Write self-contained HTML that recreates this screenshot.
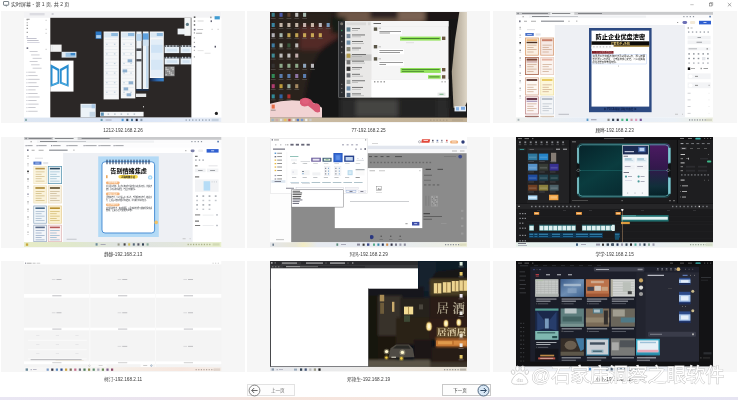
<!DOCTYPE html><html lang="zh-CN"><head><meta charset="utf-8"><title>实时屏幕</title><style>
html,body{margin:0;padding:0;background:#fff}
body{width:738px;height:400px;position:relative;overflow:hidden;font-family:"Liberation Sans","Noto Sans CJK SC",sans-serif}
#pg{position:absolute;left:0;top:0;width:738px;height:400px;overflow:hidden;background:#fff;filter:blur(0.4px)}
.abs{position:absolute}
.panel{position:absolute;background:#f6f6f6}
.thumb{position:absolute;overflow:hidden;display:block}
.lbl{position:absolute;width:120px;text-align:center;font-size:4.72px;line-height:6px;color:#3a3a3a;white-space:nowrap}
.title{position:absolute;left:11px;top:1.3px;font-size:5.0px;line-height:6.4px;color:#3c3c3c;white-space:nowrap}
.btn{position:absolute;box-sizing:border-box;border:0.6px solid #e2e2e2;background:#fdfdfd;font-size:4.6px;color:#666;line-height:11px}
svg text{font-family:"Liberation Sans","Noto Sans CJK SC",sans-serif}

</style></head><body><div id="pg">
<svg class="abs" style="left:3px;top:1.3px" width="7" height="6" viewBox="0 0 7 6"><rect x="0.5" y="0.5" width="5.2" height="3.7" rx="0.5" fill="#fff" stroke="#44505a" stroke-width="0.7"/><path d="M2 4.3 L3 5.3 L4.2 4.3" fill="none" stroke="#44505a" stroke-width="0.6"/></svg>
<div class="title">实时屏幕 - 第 1 页, 共 2 页</div>
<svg class="abs" style="left:686px;top:0" width="52" height="10" viewBox="686 0 52 10"><path d="M690.3 4.7 H693.7" stroke="#888" stroke-width="0.5"/><rect x="709.3" y="3.2" width="2.6" height="2.8" fill="none" stroke="#666" stroke-width="0.5"/><path d="M710 3.2 V2.5 H712.7 V5.3 H711.9" fill="none" stroke="#666" stroke-width="0.45"/><path d="M727.8 3 L731.3 6.4 M731.3 3 L727.8 6.4" stroke="#666" stroke-width="0.55"/></svg>
<div class="panel" style="left:1.0px;top:11.4px;width:243.5px;height:111.8px"></div>
<div class="panel" style="left:246.7px;top:11.4px;width:243.7px;height:111.8px"></div>
<div class="panel" style="left:492.6px;top:11.4px;width:244.6px;height:111.8px"></div>
<div class="panel" style="left:1.0px;top:136.7px;width:243.5px;height:111.3px"></div>
<div class="panel" style="left:246.7px;top:136.7px;width:243.7px;height:111.3px"></div>
<div class="panel" style="left:492.6px;top:136.7px;width:244.6px;height:111.3px"></div>
<div class="panel" style="left:1.0px;top:260.6px;width:243.5px;height:111.3px"></div>
<div class="panel" style="left:246.7px;top:260.6px;width:243.7px;height:111.3px"></div>
<div class="panel" style="left:492.6px;top:260.6px;width:244.6px;height:111.3px"></div>
<svg class="thumb" style="left:24.4px;top:12.2px" width="197.3" height="110.3" viewBox="24.4 12.2 197.3 110.3"><defs><linearGradient id="t1bar" x1="0" x2="1" y1="0" y2="0"><stop offset="0" stop-color="#16233e"/><stop offset="0.5" stop-color="#2a62a8"/><stop offset="1" stop-color="#3b84c8"/></linearGradient>
<linearGradient id="t1task" x1="0" x2="1" y1="0" y2="0"><stop offset="0" stop-color="#dde6f2"/><stop offset="0.5" stop-color="#d9e4f6"/><stop offset="1" stop-color="#e6ecf6"/></linearGradient>
</defs><rect x="24.40" y="12.20" width="197.30" height="110.30" fill="#ffffff" /><rect x="24.40" y="12.20" width="197.30" height="5.80" fill="#f3f3f5" /><rect x="30.00" y="13.20" width="15.00" height="2.40" fill="#dcdce2" /><rect x="52.00" y="13.40" width="2.00" height="1.60" fill="#c8c8d0" /><rect x="27.00" y="19.00" width="3.00" height="0.80" fill="#777" /><rect x="27.00" y="19.50" width="1.30" height="1.00" fill="#999" /><rect x="27.00" y="22.50" width="1.30" height="1.00" fill="#aaa" /><rect x="27.00" y="25.00" width="1.30" height="1.00" fill="#888" /><rect x="27.00" y="28.00" width="1.30" height="1.00" fill="#777" /><rect x="27.00" y="32.00" width="1.30" height="1.00" fill="#888" /><rect x="27.00" y="36.50" width="1.30" height="1.00" fill="#99a" /><rect x="27.00" y="38.30" width="10.00" height="0.70" fill="#aab" /><rect x="27.50" y="40.50" width="11.50" height="0.60" fill="#99a" /><rect x="27.50" y="42.30" width="12.50" height="0.60" fill="#bbc" /><rect x="27.00" y="47.50" width="1.60" height="1.70" fill="#778" /><rect x="30.00" y="51.50" width="8.00" height="0.70" fill="#b8b8c0" /><rect x="31.50" y="54.80" width="8.50" height="0.70" fill="#b8b8c0" /><rect x="33.00" y="58.10" width="9.00" height="0.70" fill="#b8b8c0" /><rect x="30.00" y="61.40" width="8.00" height="0.70" fill="#b8b8c0" /><rect x="31.50" y="64.70" width="8.50" height="0.70" fill="#b8b8c0" /><rect x="33.00" y="68.00" width="9.00" height="0.70" fill="#b8b8c0" /><rect x="27.00" y="72.00" width="0.70" height="0.80" fill="#889" /><rect x="28.60" y="72.00" width="7.40" height="0.70" fill="#b4b4bc" /><rect x="27.00" y="75.55" width="0.70" height="0.80" fill="#889" /><rect x="28.60" y="75.55" width="9.40" height="0.70" fill="#b4b4bc" /><rect x="27.00" y="79.10" width="0.70" height="0.80" fill="#889" /><rect x="28.60" y="79.10" width="11.40" height="0.70" fill="#b4b4bc" /><rect x="27.00" y="82.65" width="0.70" height="0.80" fill="#889" /><rect x="28.60" y="82.65" width="8.40" height="0.70" fill="#b4b4bc" /><rect x="27.00" y="86.20" width="0.70" height="0.80" fill="#889" /><rect x="28.60" y="86.20" width="10.40" height="0.70" fill="#b4b4bc" /><rect x="27.00" y="89.75" width="0.70" height="0.80" fill="#889" /><rect x="28.60" y="89.75" width="7.40" height="0.70" fill="#b4b4bc" /><rect x="27.00" y="93.30" width="0.70" height="0.80" fill="#889" /><rect x="28.60" y="93.30" width="9.40" height="0.70" fill="#b4b4bc" /><rect x="27.00" y="96.85" width="0.70" height="0.80" fill="#889" /><rect x="28.60" y="96.85" width="11.40" height="0.70" fill="#b4b4bc" /><rect x="27.00" y="100.40" width="0.70" height="0.80" fill="#889" /><rect x="28.60" y="100.40" width="8.40" height="0.70" fill="#b4b4bc" /><rect x="27.00" y="103.95" width="0.70" height="0.80" fill="#889" /><rect x="28.60" y="103.95" width="10.40" height="0.70" fill="#b4b4bc" /><rect x="27.00" y="107.50" width="0.70" height="0.80" fill="#889" /><rect x="28.60" y="107.50" width="7.40" height="0.70" fill="#b4b4bc" /><rect x="27.00" y="111.05" width="0.70" height="0.80" fill="#889" /><rect x="28.60" y="111.05" width="9.40" height="0.70" fill="#b4b4bc" /><rect x="46.00" y="20.00" width="1.00" height="1.00" fill="#bbb" /><rect x="46.00" y="29.00" width="1.00" height="1.00" fill="#bbb" /><rect x="46.00" y="33.00" width="1.00" height="1.00" fill="#bbb" /><rect x="46.00" y="49.00" width="1.00" height="1.00" fill="#bbb" /><rect x="50.70" y="18.00" width="141.30" height="99.80" fill="#2b2726" /><rect x="50.70" y="44.80" width="11.30" height="7.20" fill="#f1f1f1" /><rect x="52.30" y="46.00" width="0.70" height="0.70" fill="#c8d4dc" /><rect x="52.30" y="47.90" width="0.70" height="0.70" fill="#c8d4dc" /><rect x="52.30" y="49.80" width="0.70" height="0.70" fill="#c8d4dc" /><rect x="54.70" y="46.00" width="-1.70" height="0.70" fill="#c8d4dc" /><rect x="54.70" y="47.90" width="-1.70" height="0.70" fill="#c8d4dc" /><rect x="54.70" y="49.80" width="-1.70" height="0.70" fill="#c8d4dc" /><rect x="57.10" y="46.00" width="-4.10" height="0.70" fill="#c8d4dc" /><rect x="57.10" y="47.90" width="-4.10" height="0.70" fill="#c8d4dc" /><rect x="57.10" y="49.80" width="-4.10" height="0.70" fill="#c8d4dc" /><rect x="59.50" y="46.00" width="-6.50" height="0.70" fill="#c8d4dc" /><rect x="59.50" y="47.90" width="-6.50" height="0.70" fill="#c8d4dc" /><rect x="59.50" y="49.80" width="-6.50" height="0.70" fill="#c8d4dc" /><rect x="62.00" y="52.00" width="14.80" height="5.80" fill="#dfe9f1" /><rect x="66.00" y="53.00" width="10.00" height="4.00" fill="#9cc3e3" /><rect x="71.00" y="53.20" width="4.50" height="2.30" fill="#3a86c8" /><rect x="50.70" y="60.80" width="23.20" height="31.00" fill="#ffffff" /><g><path d="M51 64.4 L59.7 69.3 L59.7 83.7 L51 87 Z" fill="#2a8ed0"/><path d="M69 64.4 L60.3 69.3 L60.3 83.7 L69 87 Z" fill="#2a8ed0"/><path d="M52.9 68.2 L57.9 71 L57.9 82.2 L52.9 84.2 Z" fill="#ffffff"/><path d="M67.1 68.2 L62.1 71 L62.1 82.2 L67.1 84.2 Z" fill="#ffffff"/><path d="M51.6 85.6 L59 82.9 M68.4 85.6 L61 82.9" stroke="#6fd0f2" stroke-width="0.5" fill="none"/></g><rect x="96.00" y="31.70" width="5.90" height="7.30" fill="#2b78c6" /><rect x="96.60" y="35.30" width="4.70" height="3.10" fill="#a9cdec" /><rect x="104.00" y="31.70" width="15.30" height="67.90" fill="#f6f7f8" /><rect x="104.60" y="32.90" width="14.10" height="4.80" fill="#dbe8f3" /><rect x="111.65" y="33.20" width="6.65" height="3.00" fill="#8fbbe0" /><rect x="105.50" y="39.70" width="12.30" height="0.50" fill="#dfe5ea" /><rect x="105.50" y="42.90" width="12.30" height="0.50" fill="#dfe5ea" /><rect x="106.50" y="43.90" width="1.50" height="1.20" fill="#c2d2e0" /><rect x="114.30" y="43.90" width="1.50" height="1.20" fill="#c2d2e0" /><rect x="105.50" y="46.10" width="12.30" height="0.50" fill="#dfe5ea" /><rect x="105.50" y="49.30" width="12.30" height="0.50" fill="#dfe5ea" /><rect x="105.50" y="52.50" width="12.30" height="0.50" fill="#dfe5ea" /><rect x="106.50" y="53.50" width="1.50" height="1.20" fill="#c2d2e0" /><rect x="114.30" y="53.50" width="1.50" height="1.20" fill="#c2d2e0" /><rect x="105.50" y="55.70" width="12.30" height="0.50" fill="#dfe5ea" /><rect x="105.50" y="58.90" width="12.30" height="0.50" fill="#dfe5ea" /><rect x="105.50" y="62.10" width="12.30" height="0.50" fill="#dfe5ea" /><rect x="106.50" y="63.10" width="1.50" height="1.20" fill="#c2d2e0" /><rect x="114.30" y="63.10" width="1.50" height="1.20" fill="#c2d2e0" /><rect x="105.50" y="65.30" width="12.30" height="0.50" fill="#dfe5ea" /><rect x="105.50" y="68.50" width="12.30" height="0.50" fill="#dfe5ea" /><rect x="105.50" y="71.70" width="12.30" height="0.50" fill="#dfe5ea" /><rect x="106.50" y="72.70" width="1.50" height="1.20" fill="#c2d2e0" /><rect x="114.30" y="72.70" width="1.50" height="1.20" fill="#c2d2e0" /><rect x="105.50" y="74.90" width="12.30" height="0.50" fill="#dfe5ea" /><rect x="105.50" y="78.10" width="12.30" height="0.50" fill="#dfe5ea" /><rect x="105.50" y="81.30" width="12.30" height="0.50" fill="#dfe5ea" /><rect x="106.50" y="82.30" width="1.50" height="1.20" fill="#c2d2e0" /><rect x="114.30" y="82.30" width="1.50" height="1.20" fill="#c2d2e0" /><rect x="105.50" y="84.50" width="12.30" height="0.50" fill="#dfe5ea" /><rect x="105.50" y="87.70" width="12.30" height="0.50" fill="#dfe5ea" /><rect x="105.50" y="90.90" width="12.30" height="0.50" fill="#dfe5ea" /><rect x="106.50" y="91.90" width="1.50" height="1.20" fill="#c2d2e0" /><rect x="114.30" y="91.90" width="1.50" height="1.20" fill="#c2d2e0" /><rect x="105.50" y="94.10" width="12.30" height="0.50" fill="#dfe5ea" /><rect x="121.20" y="31.70" width="14.50" height="66.90" fill="#f6f7f8" /><rect x="121.80" y="32.90" width="13.30" height="4.80" fill="#dbe8f3" /><rect x="128.45" y="33.20" width="6.25" height="3.00" fill="#8fbbe0" /><rect x="122.70" y="39.70" width="11.50" height="0.50" fill="#dfe5ea" /><rect x="122.70" y="42.90" width="11.50" height="0.50" fill="#dfe5ea" /><rect x="123.70" y="43.90" width="1.50" height="1.20" fill="#c2d2e0" /><rect x="130.70" y="43.90" width="1.50" height="1.20" fill="#c2d2e0" /><rect x="122.70" y="46.10" width="11.50" height="0.50" fill="#dfe5ea" /><rect x="122.70" y="49.30" width="11.50" height="0.50" fill="#dfe5ea" /><rect x="122.70" y="52.50" width="11.50" height="0.50" fill="#dfe5ea" /><rect x="123.70" y="53.50" width="1.50" height="1.20" fill="#c2d2e0" /><rect x="130.70" y="53.50" width="1.50" height="1.20" fill="#c2d2e0" /><rect x="122.70" y="55.70" width="11.50" height="0.50" fill="#dfe5ea" /><rect x="122.70" y="58.90" width="11.50" height="0.50" fill="#dfe5ea" /><rect x="122.70" y="62.10" width="11.50" height="0.50" fill="#dfe5ea" /><rect x="123.70" y="63.10" width="1.50" height="1.20" fill="#c2d2e0" /><rect x="130.70" y="63.10" width="1.50" height="1.20" fill="#c2d2e0" /><rect x="122.70" y="65.30" width="11.50" height="0.50" fill="#dfe5ea" /><rect x="122.70" y="68.50" width="11.50" height="0.50" fill="#dfe5ea" /><rect x="122.70" y="71.70" width="11.50" height="0.50" fill="#dfe5ea" /><rect x="123.70" y="72.70" width="1.50" height="1.20" fill="#c2d2e0" /><rect x="130.70" y="72.70" width="1.50" height="1.20" fill="#c2d2e0" /><rect x="122.70" y="74.90" width="11.50" height="0.50" fill="#dfe5ea" /><rect x="122.70" y="78.10" width="11.50" height="0.50" fill="#dfe5ea" /><rect x="122.70" y="81.30" width="11.50" height="0.50" fill="#dfe5ea" /><rect x="123.70" y="82.30" width="1.50" height="1.20" fill="#c2d2e0" /><rect x="130.70" y="82.30" width="1.50" height="1.20" fill="#c2d2e0" /><rect x="122.70" y="84.50" width="11.50" height="0.50" fill="#dfe5ea" /><rect x="122.70" y="87.70" width="11.50" height="0.50" fill="#dfe5ea" /><rect x="122.70" y="90.90" width="11.50" height="0.50" fill="#dfe5ea" /><rect x="123.70" y="91.90" width="1.50" height="1.20" fill="#c2d2e0" /><rect x="130.70" y="91.90" width="1.50" height="1.20" fill="#c2d2e0" /><rect x="122.70" y="94.10" width="11.50" height="0.50" fill="#dfe5ea" /><rect x="128.00" y="59.50" width="4.60" height="3.00" fill="#8fb0cf" /><rect x="123.00" y="69.60" width="4.60" height="3.00" fill="#8fb0cf" /><rect x="129.00" y="81.50" width="4.60" height="3.00" fill="#8fb0cf" /><rect x="124.00" y="87.60" width="4.60" height="3.00" fill="#8fb0cf" /><rect x="127.00" y="93.50" width="4.60" height="3.00" fill="#8fb0cf" /><rect x="136.70" y="31.70" width="5.30" height="57.50" fill="#eef3f7" /><rect x="136.70" y="34.00" width="5.30" height="7.00" fill="#b9d6ee" /><rect x="136.70" y="48.60" width="5.30" height="2.60" fill="#4a4c52" /><rect x="136.70" y="59.30" width="5.30" height="2.30" fill="#4a4c52" /><rect x="143.20" y="31.70" width="5.80" height="57.50" fill="#eef3f7" /><rect x="143.20" y="33.50" width="5.80" height="6.50" fill="#5ea2e0" /><rect x="143.20" y="40.00" width="5.80" height="6.00" fill="#cfe2f2" /><rect x="146.40" y="46.00" width="2.20" height="42.00" fill="#c4dcf0" /><rect x="136.70" y="89.20" width="12.30" height="1.80" fill="#1f3350" /><rect x="136.30" y="93.80" width="10.30" height="3.40" fill="#e6e8ea" /><rect x="150.20" y="31.70" width="14.00" height="46.60" fill="#f6f7f8" /><rect x="150.80" y="32.90" width="12.80" height="4.80" fill="#dbe8f3" /><rect x="157.20" y="33.20" width="6.00" height="3.00" fill="#8fbbe0" /><rect x="151.70" y="39.70" width="11.00" height="0.50" fill="#dfe5ea" /><rect x="151.70" y="42.90" width="11.00" height="0.50" fill="#dfe5ea" /><rect x="152.70" y="43.90" width="1.50" height="1.20" fill="#c2d2e0" /><rect x="159.20" y="43.90" width="1.50" height="1.20" fill="#c2d2e0" /><rect x="151.70" y="46.10" width="11.00" height="0.50" fill="#dfe5ea" /><rect x="151.70" y="49.30" width="11.00" height="0.50" fill="#dfe5ea" /><rect x="151.70" y="52.50" width="11.00" height="0.50" fill="#dfe5ea" /><rect x="152.70" y="53.50" width="1.50" height="1.20" fill="#c2d2e0" /><rect x="159.20" y="53.50" width="1.50" height="1.20" fill="#c2d2e0" /><rect x="151.70" y="55.70" width="11.00" height="0.50" fill="#dfe5ea" /><rect x="151.70" y="58.90" width="11.00" height="0.50" fill="#dfe5ea" /><rect x="151.70" y="62.10" width="11.00" height="0.50" fill="#dfe5ea" /><rect x="152.70" y="63.10" width="1.50" height="1.20" fill="#c2d2e0" /><rect x="159.20" y="63.10" width="1.50" height="1.20" fill="#c2d2e0" /><rect x="151.70" y="65.30" width="11.00" height="0.50" fill="#dfe5ea" /><rect x="151.70" y="68.50" width="11.00" height="0.50" fill="#dfe5ea" /><rect x="151.70" y="71.70" width="11.00" height="0.50" fill="#dfe5ea" /><rect x="152.70" y="72.70" width="1.50" height="1.20" fill="#c2d2e0" /><rect x="159.20" y="72.70" width="1.50" height="1.20" fill="#c2d2e0" /><rect x="151.70" y="74.90" width="11.00" height="0.50" fill="#dfe5ea" /><rect x="151.20" y="40.00" width="12.00" height="37.00" fill="#e3eef8" /><rect x="151.50" y="45.00" width="11.50" height="8.00" fill="#cfe3f5" /><rect x="151.50" y="60.00" width="11.50" height="10.00" fill="#d6e7f6" /><rect x="150.2" y="78.3" width="14" height="3.3" fill="url(#t1bar)"/><rect x="165.00" y="45.80" width="14.70" height="7.50" fill="#e9f1f8" /><rect x="165.00" y="45.80" width="14.70" height="1.20" fill="#3a4048" /><rect x="167.00" y="48.80" width="10.70" height="3.00" fill="#d3e3f1" /><rect x="166.50" y="45.40" width="1.00" height="2.00" fill="#cfd8e0" /><rect x="169.70" y="45.40" width="1.00" height="2.00" fill="#cfd8e0" /><rect x="172.90" y="45.40" width="1.00" height="2.00" fill="#cfd8e0" /><rect x="176.10" y="45.40" width="1.00" height="2.00" fill="#cfd8e0" /><rect x="165.00" y="57.40" width="14.70" height="7.20" fill="#e9f1f8" /><rect x="165.00" y="57.40" width="14.70" height="1.20" fill="#3a4048" /><rect x="167.00" y="60.40" width="10.70" height="2.70" fill="#d3e3f1" /><rect x="166.50" y="57.00" width="1.00" height="2.00" fill="#cfd8e0" /><rect x="169.70" y="57.00" width="1.00" height="2.00" fill="#cfd8e0" /><rect x="172.90" y="57.00" width="1.00" height="2.00" fill="#cfd8e0" /><rect x="176.10" y="57.00" width="1.00" height="2.00" fill="#cfd8e0" /><rect x="180.90" y="45.80" width="11.10" height="7.50" fill="#e9f1f8" /><rect x="180.90" y="45.80" width="11.10" height="1.20" fill="#3a4048" /><rect x="182.90" y="48.80" width="7.10" height="3.00" fill="#d3e3f1" /><rect x="182.40" y="45.40" width="1.00" height="2.00" fill="#cfd8e0" /><rect x="185.60" y="45.40" width="1.00" height="2.00" fill="#cfd8e0" /><rect x="188.80" y="45.40" width="1.00" height="2.00" fill="#cfd8e0" /><rect x="192.00" y="45.40" width="1.00" height="2.00" fill="#cfd8e0" /><rect x="180.90" y="57.40" width="11.10" height="7.20" fill="#e9f1f8" /><rect x="180.90" y="57.40" width="11.10" height="1.20" fill="#3a4048" /><rect x="182.90" y="60.40" width="7.10" height="2.70" fill="#d3e3f1" /><rect x="182.40" y="57.00" width="1.00" height="2.00" fill="#cfd8e0" /><rect x="185.60" y="57.00" width="1.00" height="2.00" fill="#cfd8e0" /><rect x="188.80" y="57.00" width="1.00" height="2.00" fill="#cfd8e0" /><rect x="192.00" y="57.00" width="1.00" height="2.00" fill="#cfd8e0" /><rect x="165.20" y="66.70" width="9.80" height="9.70" fill="#8c8c8c" /><rect x="166.00" y="67.50" width="1.20" height="1.20" fill="#cfcfcf" /><rect x="166.00" y="69.20" width="1.20" height="1.20" fill="#cfcfcf" /><rect x="166.00" y="74.30" width="1.20" height="1.20" fill="#cfcfcf" /><rect x="167.70" y="69.20" width="1.20" height="1.20" fill="#cfcfcf" /><rect x="167.70" y="70.90" width="1.20" height="1.20" fill="#cfcfcf" /><rect x="169.40" y="70.90" width="1.20" height="1.20" fill="#cfcfcf" /><rect x="169.40" y="72.60" width="1.20" height="1.20" fill="#cfcfcf" /><rect x="171.10" y="67.50" width="1.20" height="1.20" fill="#cfcfcf" /><rect x="171.10" y="72.60" width="1.20" height="1.20" fill="#cfcfcf" /><rect x="171.10" y="74.30" width="1.20" height="1.20" fill="#cfcfcf" /><rect x="172.80" y="67.50" width="1.20" height="1.20" fill="#cfcfcf" /><rect x="172.80" y="69.20" width="1.20" height="1.20" fill="#cfcfcf" /><rect x="172.80" y="74.30" width="1.20" height="1.20" fill="#cfcfcf" /><rect x="184.80" y="18.00" width="6.40" height="18.00" fill="#f3f5f6" /><rect x="178.00" y="28.80" width="7.50" height="5.80" fill="#eef3f7" /><circle cx="187.8" cy="24.6" r="1.6" fill="#5d7b86"/><rect x="80.90" y="104.00" width="15.20" height="13.60" fill="#edf3f8" /><rect x="82.00" y="105.00" width="13.00" height="3.00" fill="#cfe0ee" /><rect x="90.00" y="112.00" width="5.50" height="5.00" fill="#c4d6e6" /><rect x="92.00" y="104.50" width="3.60" height="4.00" fill="#a8c7e3" /><rect x="100.50" y="112.00" width="43.50" height="4.70" fill="#f4f6f8" /><rect x="101.20" y="112.70" width="3.00" height="3.30" fill="#5a8fb4" /><rect x="108.00" y="113.60" width="1.50" height="1.50" fill="#b8c4cc" /><rect x="114.50" y="113.60" width="1.50" height="1.50" fill="#b8c4cc" /><rect x="121.00" y="113.60" width="1.50" height="1.50" fill="#b8c4cc" /><rect x="127.50" y="113.60" width="1.50" height="1.50" fill="#b8c4cc" /><rect x="134.00" y="113.60" width="1.50" height="1.50" fill="#b8c4cc" /><rect x="143.60" y="106.20" width="0.80" height="1.40" fill="#e8e8e8" /><rect x="192.00" y="18.00" width="29.70" height="99.80" fill="#ffffff" /><rect x="215.00" y="16.40" width="5.20" height="3.20" fill="#3f9bd1" /><rect x="210.50" y="16.80" width="1.50" height="1.60" fill="#999" /><rect x="194.20" y="16.60" width="1.60" height="1.60" fill="#555" /><rect x="194.20" y="20.60" width="1.40" height="1.40" fill="#777" /><rect x="194.20" y="24.40" width="1.40" height="1.40" fill="#555" /><rect x="194.20" y="29.00" width="1.60" height="1.60" fill="#667" /><rect x="194.20" y="32.50" width="1.20" height="1.20" fill="#999" /><rect x="194.20" y="37.50" width="1.20" height="1.20" fill="#aaa" /><rect x="194.20" y="42.00" width="1.20" height="1.20" fill="#aaa" /><rect x="194.20" y="46.20" width="1.40" height="1.40" fill="#667" /><rect x="194.20" y="50.00" width="1.20" height="1.20" fill="#bbb" /><rect x="194.20" y="56.50" width="1.20" height="1.20" fill="#999" /><rect x="198.00" y="20.80" width="6.00" height="0.80" fill="#ccc" /><rect x="197.50" y="29.20" width="6.00" height="0.80" fill="#bbb" /><rect x="196.50" y="33.00" width="6.00" height="0.80" fill="#999" /><rect x="198.00" y="50.50" width="6.00" height="0.80" fill="#ddd" /><rect x="205.00" y="53.00" width="6.00" height="0.80" fill="#ddd" /><rect x="211.00" y="20.50" width="1.40" height="1.80" fill="#667" /><rect x="215.00" y="46.00" width="1.40" height="1.80" fill="#556" /><rect x="212.00" y="29.00" width="1.00" height="1.00" fill="#bbb" /><rect x="218.00" y="29.00" width="1.00" height="1.00" fill="#bbb" /><circle cx="216.8" cy="113.6" r="1.6" fill="#222"/><rect x="24.4" y="117.8" width="197.3" height="4.70" fill="url(#t1task)"/><rect x="25.50" y="119.00" width="1.80" height="2.20" fill="#8aa" /><rect x="101.00" y="119.00" width="2.00" height="2.20" fill="#69a" /><rect x="106.00" y="119.80" width="6.00" height="0.80" fill="#99a" /><rect x="122.00" y="119.00" width="2.00" height="2.30" fill="#4a9ad8" /><rect x="126.70" y="119.00" width="2.00" height="2.30" fill="#345" /><rect x="131.40" y="119.00" width="2.00" height="2.30" fill="#4a7a9a" /><rect x="136.10" y="119.00" width="2.00" height="2.30" fill="#223" /><rect x="140.80" y="119.00" width="2.00" height="2.30" fill="#89a" /><rect x="186.00" y="119.60" width="1.20" height="1.30" fill="#8898a8" /><rect x="189.30" y="119.60" width="1.20" height="1.30" fill="#8898a8" /><rect x="192.60" y="119.60" width="1.20" height="1.30" fill="#8898a8" /><rect x="195.90" y="119.60" width="1.20" height="1.30" fill="#8898a8" /><rect x="199.20" y="119.60" width="1.20" height="1.30" fill="#8898a8" /><rect x="202.50" y="119.60" width="1.20" height="1.30" fill="#8898a8" /><rect x="205.80" y="119.60" width="1.20" height="1.30" fill="#8898a8" /><rect x="209.10" y="119.60" width="1.20" height="1.30" fill="#8898a8" /><rect x="212.00" y="119.00" width="7.00" height="2.40" fill="#c4d0de" /></svg>
<svg class="thumb" style="left:270.0px;top:12.2px" width="197.3" height="110.3" viewBox="270.0 12.2 197.3 110.3"><defs><linearGradient id="t2beige" x1="0" x2="1" y1="0" y2="0"><stop offset="0" stop-color="#a89e8c"/><stop offset="0.6" stop-color="#c9c0b0"/><stop offset="1" stop-color="#e2dacb"/></linearGradient>
<filter id="b2" x="-5%" y="-5%" width="110%" height="110%"><feGaussianBlur stdDeviation="2.2"/></filter>
<filter id="b2s"><feGaussianBlur stdDeviation="0.7"/></filter>
<filter id="b2i"><feGaussianBlur stdDeviation="0.35"/></filter>
<linearGradient id="t2task" x1="0" x2="1" y1="0" y2="0"><stop offset="0" stop-color="#cdbfa9"/><stop offset="0.5" stop-color="#c6b69c"/><stop offset="1" stop-color="#bfae93"/></linearGradient>
</defs><rect x="270.00" y="12.20" width="197.30" height="110.30" fill="#1c1816" /><g filter="url(#b2)"><rect x="270.00" y="12.00" width="70.00" height="108.00" fill="#2a211c" /><rect x="338.00" y="10.00" width="84.00" height="14.00" fill="#6e5646" /><rect x="370.00" y="10.00" width="30.00" height="9.00" fill="#2a2422" /><rect x="398.00" y="10.00" width="27.00" height="12.00" fill="#7a6252" /><rect x="425.00" y="10.00" width="37.00" height="20.00" fill="#1a1818" /><rect x="300.00" y="27.00" width="38.00" height="23.00" fill="#522a28" /><rect x="270.00" y="30.00" width="30.00" height="30.00" fill="#2c211b" /><path d="M340 36 L322 48 L310 70 L304 100 L306 120 L350 120 L350 36 Z" fill="#121212"/><rect x="331.00" y="17.00" width="15.00" height="17.00" fill="#151a17" /><rect x="340.00" y="98.00" width="110.00" height="21.00" fill="#2b2b2a" /><rect x="356.00" y="100.00" width="42.00" height="17.00" fill="#454443" /><rect x="398.00" y="98.00" width="38.00" height="20.00" fill="#242322" /><rect x="449.00" y="20.00" width="13.00" height="99.00" fill="#161514" /><rect x="450.00" y="108.00" width="18.00" height="11.00" fill="#23211f" /></g><g filter="url(#b2s)"><path d="M459.5 11 L468 11 L468 100 L464.5 108 L453.5 108 L451.8 72 L455 40 Z" fill="url(#t2beige)"/><rect x="449.50" y="108.50" width="18.50" height="9.50" fill="#1f1d1b" /></g><g filter="url(#b2s)"><path d="M270 104 Q285 99 300 101 Q312 100 322 108 L322 118 L270 118 Z" fill="#f1d3d3"/><path d="M300 100 Q305 96 311 100 L314 104 Q318 102 320 106 L320 112 Q316 114 313 110 L308 106 Q302 108 300 104 Z" fill="#d95a74"/><ellipse cx="305.5" cy="101.5" rx="3.4" ry="2.6" fill="#e0607c"/></g><g><rect x="271.65" y="13.00" width="3.10" height="4.00" fill="#3f93a4" opacity="0.8"/><rect x="270.80" y="18.20" width="4.80" height="0.60" fill="#625e5a" /><rect x="279.50" y="13.00" width="3.10" height="4.00" fill="#5566c8" opacity="0.8"/><rect x="278.65" y="18.20" width="4.80" height="0.60" fill="#625e5a" /><rect x="287.35" y="13.00" width="3.10" height="4.00" fill="#6a4a38" opacity="0.8"/><rect x="286.50" y="18.20" width="4.80" height="0.60" fill="#625e5a" /><rect x="295.20" y="13.00" width="3.10" height="4.00" fill="#e2e2e2" opacity="0.8"/><rect x="294.35" y="18.20" width="4.80" height="0.60" fill="#625e5a" /><rect x="303.05" y="13.00" width="3.10" height="4.00" fill="#c4dcd2" opacity="0.8"/><rect x="302.20" y="18.20" width="4.80" height="0.60" fill="#625e5a" /><rect x="271.65" y="23.20" width="3.10" height="4.00" fill="#3f9dc2" opacity="0.8"/><rect x="270.80" y="28.40" width="4.80" height="0.60" fill="#625e5a" /><rect x="279.50" y="23.20" width="3.10" height="4.00" fill="#ead9c9" opacity="0.8"/><rect x="278.65" y="28.40" width="4.80" height="0.60" fill="#625e5a" /><rect x="287.35" y="23.20" width="3.10" height="4.00" fill="#ead9c9" opacity="0.8"/><rect x="286.50" y="28.40" width="4.80" height="0.60" fill="#625e5a" /><rect x="295.20" y="23.20" width="3.10" height="4.00" fill="#ead9c9" opacity="0.8"/><rect x="294.35" y="28.40" width="4.80" height="0.60" fill="#625e5a" /><rect x="303.05" y="23.20" width="3.10" height="4.00" fill="#e6d4d0" opacity="0.8"/><rect x="302.20" y="28.40" width="4.80" height="0.60" fill="#625e5a" /><rect x="310.90" y="23.20" width="3.10" height="4.00" fill="#ead9c9" opacity="0.8"/><rect x="310.05" y="28.40" width="4.80" height="0.60" fill="#625e5a" /><rect x="318.75" y="23.20" width="3.10" height="4.00" fill="#e4e4e8" opacity="0.8"/><rect x="317.90" y="28.40" width="4.80" height="0.60" fill="#625e5a" /><rect x="326.60" y="23.20" width="3.10" height="4.00" fill="#86b4e2" opacity="0.8"/><rect x="325.75" y="28.40" width="4.80" height="0.60" fill="#625e5a" /><rect x="271.65" y="33.40" width="3.10" height="4.00" fill="#d4d4dc" opacity="0.8"/><rect x="270.80" y="38.60" width="4.80" height="0.60" fill="#625e5a" /><rect x="279.50" y="33.40" width="3.10" height="4.00" fill="#c4dcd2" opacity="0.8"/><rect x="278.65" y="38.60" width="4.80" height="0.60" fill="#625e5a" /><rect x="287.35" y="33.40" width="3.10" height="4.00" fill="#e6c662" opacity="0.8"/><rect x="286.50" y="38.60" width="4.80" height="0.60" fill="#625e5a" /><rect x="295.20" y="33.40" width="3.10" height="4.00" fill="#e6c662" opacity="0.8"/><rect x="294.35" y="38.60" width="4.80" height="0.60" fill="#625e5a" /><rect x="303.05" y="33.40" width="3.10" height="4.00" fill="#e6c662" opacity="0.8"/><rect x="302.20" y="38.60" width="4.80" height="0.60" fill="#625e5a" /><rect x="310.90" y="33.40" width="3.10" height="4.00" fill="#e6c662" opacity="0.8"/><rect x="310.05" y="38.60" width="4.80" height="0.60" fill="#625e5a" /><rect x="318.75" y="33.40" width="3.10" height="4.00" fill="#e6c662" opacity="0.8"/><rect x="317.90" y="38.60" width="4.80" height="0.60" fill="#625e5a" /><rect x="271.65" y="43.60" width="3.10" height="4.00" fill="#4592c2" opacity="0.8"/><rect x="270.80" y="48.80" width="4.80" height="0.60" fill="#625e5a" /><rect x="279.50" y="43.60" width="3.10" height="4.00" fill="#dae2d2" opacity="0.8"/><rect x="278.65" y="48.80" width="4.80" height="0.60" fill="#625e5a" /><rect x="287.35" y="43.60" width="3.10" height="4.00" fill="#3c6444" opacity="0.8"/><rect x="286.50" y="48.80" width="4.80" height="0.60" fill="#625e5a" /><rect x="295.20" y="43.60" width="3.10" height="4.00" fill="#e2e2e2" opacity="0.8"/><rect x="294.35" y="48.80" width="4.80" height="0.60" fill="#625e5a" /><rect x="271.65" y="53.80" width="3.10" height="4.00" fill="#45a2b2" opacity="0.8"/><rect x="270.80" y="59.00" width="4.80" height="0.60" fill="#625e5a" /><rect x="279.50" y="53.80" width="3.10" height="4.00" fill="#e2e2e2" opacity="0.8"/><rect x="278.65" y="59.00" width="4.80" height="0.60" fill="#625e5a" /><rect x="287.35" y="53.80" width="3.10" height="4.00" fill="#e6e6e6" opacity="0.8"/><rect x="286.50" y="59.00" width="4.80" height="0.60" fill="#625e5a" /><rect x="295.20" y="53.80" width="3.10" height="4.00" fill="#ead2d2" opacity="0.8"/><rect x="294.35" y="59.00" width="4.80" height="0.60" fill="#625e5a" /><rect x="271.65" y="64.00" width="3.10" height="4.00" fill="#3a3a3a" opacity="0.8"/><rect x="270.80" y="69.20" width="4.80" height="0.60" fill="#625e5a" /><rect x="279.50" y="64.00" width="3.10" height="4.00" fill="#a6cca6" opacity="0.8"/><rect x="278.65" y="69.20" width="4.80" height="0.60" fill="#625e5a" /><rect x="287.35" y="64.00" width="3.10" height="4.00" fill="#a6cca6" opacity="0.8"/><rect x="286.50" y="69.20" width="4.80" height="0.60" fill="#625e5a" /><rect x="295.20" y="64.00" width="3.10" height="4.00" fill="#a6cca6" opacity="0.8"/><rect x="294.35" y="69.20" width="4.80" height="0.60" fill="#625e5a" /><rect x="303.05" y="64.00" width="3.10" height="4.00" fill="#a6c4e2" opacity="0.8"/><rect x="302.20" y="69.20" width="4.80" height="0.60" fill="#625e5a" /><rect x="310.90" y="64.00" width="3.10" height="4.00" fill="#e2e2e6" opacity="0.8"/><rect x="310.05" y="69.20" width="4.80" height="0.60" fill="#625e5a" /><rect x="271.65" y="74.20" width="3.10" height="4.00" fill="#34a264" opacity="0.8"/><rect x="270.80" y="79.40" width="4.80" height="0.60" fill="#625e5a" /><rect x="279.50" y="74.20" width="3.10" height="4.00" fill="#6694d2" opacity="0.8"/><rect x="278.65" y="79.40" width="4.80" height="0.60" fill="#625e5a" /><rect x="287.35" y="74.20" width="3.10" height="4.00" fill="#6694d2" opacity="0.8"/><rect x="286.50" y="79.40" width="4.80" height="0.60" fill="#625e5a" /><rect x="295.20" y="74.20" width="3.10" height="4.00" fill="#a88ac8" opacity="0.8"/><rect x="294.35" y="79.40" width="4.80" height="0.60" fill="#625e5a" /><rect x="303.05" y="74.20" width="3.10" height="4.00" fill="#6694d2" opacity="0.8"/><rect x="302.20" y="79.40" width="4.80" height="0.60" fill="#625e5a" /><rect x="271.65" y="84.40" width="3.10" height="4.00" fill="#d24484" opacity="0.8"/><rect x="270.80" y="89.60" width="4.80" height="0.60" fill="#625e5a" /><rect x="279.50" y="84.40" width="3.10" height="4.00" fill="#e2ba44" opacity="0.8"/><rect x="278.65" y="89.60" width="4.80" height="0.60" fill="#625e5a" /><rect x="287.35" y="84.40" width="3.10" height="4.00" fill="#b4d4c4" opacity="0.8"/><rect x="286.50" y="89.60" width="4.80" height="0.60" fill="#625e5a" /><rect x="295.20" y="84.40" width="3.10" height="4.00" fill="#c4a474" opacity="0.8"/><rect x="294.35" y="89.60" width="4.80" height="0.60" fill="#625e5a" /><rect x="271.65" y="94.60" width="3.10" height="4.00" fill="#34a2b4" opacity="0.8"/><rect x="270.80" y="99.80" width="4.80" height="0.60" fill="#625e5a" /><rect x="279.50" y="94.60" width="3.10" height="4.00" fill="#3474c4" opacity="0.8"/><rect x="278.65" y="99.80" width="4.80" height="0.60" fill="#625e5a" /><rect x="287.35" y="94.60" width="3.10" height="4.00" fill="#d23434" opacity="0.8"/><rect x="286.50" y="99.80" width="4.80" height="0.60" fill="#625e5a" /><rect x="271.65" y="104.80" width="3.10" height="4.00" fill="#e25424" opacity="0.8"/><rect x="270.80" y="110.00" width="4.80" height="0.60" fill="#625e5a" /></g><rect x="338.50" y="21.20" width="110.00" height="76.40" fill="#f5f5f5" /><rect x="338.50" y="21.20" width="6.50" height="76.40" fill="#2b2d30" /><circle cx="341.7" cy="24" r="1.5" fill="#7a766e"/><rect x="341.00" y="30.00" width="1.40" height="1.40" fill="#3a8a5a" /><rect x="341.00" y="35.50" width="1.40" height="1.40" fill="#777" /><rect x="341.00" y="41.00" width="1.40" height="1.40" fill="#777" /><rect x="341.00" y="46.50" width="1.40" height="1.40" fill="#777" /><rect x="341.00" y="52.00" width="1.40" height="1.40" fill="#777" /><rect x="341.00" y="84.00" width="1.40" height="1.20" fill="#666" /><rect x="341.00" y="88.00" width="1.40" height="1.20" fill="#666" /><rect x="341.00" y="92.00" width="1.40" height="1.20" fill="#666" /><rect x="345.00" y="21.20" width="26.50" height="76.40" fill="#e9e8e7" /><rect x="346.50" y="22.60" width="19.50" height="2.80" fill="#dad9d8" /><rect x="368.00" y="22.60" width="2.50" height="2.80" fill="#dad9d8" /><rect x="345.00" y="54.60" width="26.50" height="6.40" fill="#c9c8c7" /><rect x="346.60" y="27.60" width="3.80" height="4.20" fill="#5f7f8f" /><rect x="352.00" y="28.20" width="8.00" height="0.80" fill="#555" /><rect x="352.00" y="30.20" width="6.00" height="0.60" fill="#aaa" /><rect x="346.60" y="34.15" width="3.80" height="4.20" fill="#7a8a9a" /><rect x="352.00" y="34.75" width="13.00" height="0.80" fill="#555" /><rect x="352.00" y="36.75" width="9.00" height="0.60" fill="#aaa" /><rect x="346.60" y="40.70" width="3.80" height="4.20" fill="#6f8fa8" /><rect x="352.00" y="41.30" width="11.00" height="0.80" fill="#555" /><rect x="352.00" y="43.30" width="12.00" height="0.60" fill="#aaa" /><rect x="346.60" y="47.25" width="3.80" height="4.20" fill="#8a8a7a" /><rect x="352.00" y="47.85" width="9.00" height="0.80" fill="#555" /><rect x="352.00" y="49.85" width="7.00" height="0.60" fill="#aaa" /><rect x="346.60" y="53.80" width="3.80" height="4.20" fill="#b09a4a" /><rect x="352.00" y="54.40" width="14.00" height="0.80" fill="#555" /><rect x="352.00" y="56.40" width="10.00" height="0.60" fill="#aaa" /><rect x="346.60" y="60.35" width="3.80" height="4.20" fill="#777777" /><rect x="352.00" y="60.95" width="12.00" height="0.80" fill="#555" /><rect x="352.00" y="62.95" width="13.00" height="0.60" fill="#aaa" /><rect x="346.60" y="66.90" width="3.80" height="4.20" fill="#333333" /><rect x="352.00" y="67.50" width="10.00" height="0.80" fill="#555" /><rect x="352.00" y="69.50" width="8.00" height="0.60" fill="#aaa" /><rect x="346.60" y="73.45" width="3.80" height="4.20" fill="#666a70" /><rect x="352.00" y="74.05" width="8.00" height="0.80" fill="#555" /><rect x="352.00" y="76.05" width="11.00" height="0.60" fill="#aaa" /><rect x="346.60" y="80.00" width="3.80" height="4.20" fill="#9aa0a0" /><rect x="352.00" y="80.60" width="13.00" height="0.80" fill="#555" /><rect x="352.00" y="82.60" width="6.00" height="0.60" fill="#aaa" /><rect x="346.60" y="86.55" width="3.80" height="4.20" fill="#6a8aa8" /><rect x="352.00" y="87.15" width="11.00" height="0.80" fill="#555" /><rect x="352.00" y="89.15" width="9.00" height="0.60" fill="#aaa" /><rect x="346.60" y="93.10" width="3.80" height="4.20" fill="#556677" /><rect x="352.00" y="93.70" width="9.00" height="0.80" fill="#555" /><rect x="352.00" y="95.70" width="12.00" height="0.60" fill="#aaa" /><rect x="371.50" y="21.20" width="77.00" height="5.20" fill="#f5f5f5" /><rect x="373.50" y="23.20" width="7.50" height="1.00" fill="#666" /><rect x="371.50" y="26.50" width="77.00" height="0.30" fill="#e4e4e4" /><rect x="371.50" y="79.60" width="77.00" height="18.00" fill="#ffffff" /><rect x="371.50" y="79.40" width="77.00" height="0.30" fill="#e2e2e2" /><rect x="373.80" y="27.60" width="3.40" height="3.40" fill="#5a5648" /><rect x="378.60" y="28.00" width="2.40" height="0.60" fill="#999" /><rect x="378.60" y="30.60" width="23.40" height="3.80" fill="#ffffff" /><rect x="379.40" y="31.40" width="21.60" height="0.60" fill="#555" /><rect x="379.40" y="32.90" width="10.60" height="0.60" fill="#555" /><rect x="400.00" y="36.80" width="40.70" height="4.00" fill="#93e35c" /><rect x="401.50" y="38.20" width="38.00" height="0.90" fill="#3f7a2a" /><rect x="442.00" y="36.80" width="3.40" height="3.40" fill="#6b5840" /><rect x="406.00" y="42.80" width="8.00" height="0.50" fill="#c8c8c8" /><rect x="373.80" y="45.20" width="3.40" height="3.40" fill="#5a5648" /><rect x="378.60" y="46.80" width="2.40" height="0.60" fill="#999" /><rect x="378.60" y="49.20" width="25.40" height="5.20" fill="#ffffff" /><rect x="379.40" y="50.20" width="23.60" height="0.60" fill="#555" /><rect x="379.40" y="52.20" width="20.60" height="0.60" fill="#555" /><rect x="373.80" y="57.40" width="3.40" height="3.40" fill="#5a5648" /><rect x="378.60" y="58.80" width="2.40" height="0.60" fill="#999" /><rect x="378.60" y="61.40" width="25.40" height="4.60" fill="#ffffff" /><rect x="379.40" y="62.40" width="23.60" height="0.60" fill="#555" /><rect x="379.40" y="64.20" width="6.60" height="0.60" fill="#555" /><rect x="400.50" y="68.20" width="40.20" height="4.90" fill="#93e35c" /><rect x="401.80" y="69.30" width="37.70" height="0.80" fill="#3f7a2a" /><rect x="401.80" y="71.10" width="22.20" height="0.80" fill="#3f7a2a" /><rect x="442.00" y="68.20" width="3.40" height="3.40" fill="#6b5840" /><rect x="428.00" y="75.40" width="12.70" height="3.50" fill="#93e35c" /><rect x="429.20" y="76.70" width="10.30" height="0.80" fill="#3f7a2a" /><rect x="442.00" y="75.40" width="3.40" height="3.40" fill="#6b5840" /><rect x="374.00" y="81.40" width="1.40" height="1.20" fill="#888" /><rect x="377.20" y="81.40" width="1.40" height="1.20" fill="#888" /><rect x="380.40" y="81.40" width="1.40" height="1.20" fill="#888" /><rect x="383.60" y="81.40" width="1.40" height="1.20" fill="#888" /><rect x="441.50" y="81.40" width="1.20" height="1.20" fill="#999" /><rect x="444.50" y="81.40" width="1.20" height="1.20" fill="#999" /><rect x="437.50" y="92.80" width="8.00" height="3.20" fill="#e9e9e9" /><rect x="439.50" y="94.00" width="4.00" height="0.80" fill="#56a86a" /><g filter="url(#b2i)"><rect x="454.50" y="106.40" width="11.50" height="5.20" fill="#e6eef8" /><rect x="456.00" y="107.40" width="3.00" height="3.20" fill="#8ab6e6" /><rect x="461.00" y="107.00" width="4.00" height="3.00" fill="#7aa8e0" /></g><rect x="270.0" y="117.8" width="197.3" height="4.70" fill="url(#t2task)"/><rect x="271.50" y="119.00" width="2.30" height="2.40" fill="#9db4c8" /><rect x="275.70" y="119.00" width="2.30" height="2.40" fill="#caa" /><rect x="279.90" y="119.00" width="2.30" height="2.40" fill="#e0e0e0" /><rect x="284.10" y="119.00" width="2.30" height="2.40" fill="#e8c060" /><rect x="288.30" y="119.00" width="2.30" height="2.40" fill="#c55" /><rect x="292.50" y="119.00" width="2.30" height="2.40" fill="#eee" /><rect x="296.70" y="119.00" width="2.30" height="2.40" fill="#5a7ac0" /><rect x="300.90" y="119.00" width="2.30" height="2.40" fill="#7a9ad0" /><rect x="305.10" y="119.00" width="2.30" height="2.40" fill="#eee" /><rect x="309.30" y="119.00" width="2.30" height="2.40" fill="#ccc" /><rect x="430.00" y="119.80" width="1.50" height="1.20" fill="#a89a84" /><rect x="433.20" y="119.80" width="1.50" height="1.20" fill="#a89a84" /><rect x="436.40" y="119.80" width="1.50" height="1.20" fill="#a89a84" /><rect x="439.60" y="119.80" width="1.50" height="1.20" fill="#a89a84" /><rect x="442.80" y="119.80" width="1.50" height="1.20" fill="#a89a84" /><rect x="446.00" y="119.80" width="1.50" height="1.20" fill="#a89a84" /><rect x="452.00" y="119.40" width="11.00" height="2.00" fill="#b5a68e" /></svg>
<svg class="thumb" style="left:516.0px;top:12.2px" width="197.3" height="110.3" viewBox="516.0 12.2 197.3 110.3"><defs><linearGradient id="t3task" x1="0" x2="1" y1="0" y2="0"><stop offset="0" stop-color="#eef0ee"/><stop offset="0.35" stop-color="#e6edf6"/><stop offset="0.8" stop-color="#eaf0f6"/><stop offset="1" stop-color="#eef0e2"/></linearGradient></defs><rect x="516.00" y="12.20" width="197.30" height="110.30" fill="#ffffff" /><rect x="516.00" y="12.20" width="197.30" height="2.90" fill="#c9cacc" /><rect x="550.40" y="12.50" width="23.90" height="2.60" fill="#f4f5f6" /><rect x="517.20" y="13.00" width="1.80" height="1.40" fill="#8a8c90" /><rect x="522.00" y="13.30" width="26.00" height="0.80" fill="#6f7175" /><rect x="578.00" y="13.30" width="24.00" height="0.80" fill="#6f7175" /><rect x="551.90" y="13.40" width="18.40" height="0.70" fill="#55585c" /><rect x="516.00" y="15.10" width="197.30" height="3.50" fill="#fbfbfc" /><rect x="529.00" y="15.80" width="117.00" height="2.10" fill="#eff1f3" /><rect x="532.00" y="16.50" width="17.00" height="0.70" fill="#5c5f63" /><rect x="549.00" y="16.50" width="29.00" height="0.70" fill="#b4b7bb" /><rect x="522.50" y="16.20" width="1.30" height="1.30" fill="#aaa" /><rect x="683.30" y="16.20" width="1.20" height="1.20" fill="#8f96a0" /><rect x="686.50" y="16.20" width="1.20" height="1.20" fill="#8f96a0" /><rect x="689.70" y="16.20" width="1.20" height="1.20" fill="#8f96a0" /><rect x="692.90" y="16.20" width="1.20" height="1.20" fill="#8f96a0" /><rect x="709.30" y="16.00" width="1.60" height="1.60" fill="#5577aa" /><rect x="516.00" y="18.60" width="197.30" height="6.60" fill="#ffffff" /><rect x="519.00" y="20.60" width="1.60" height="1.80" fill="#778" /><rect x="524.00" y="21.00" width="3.00" height="0.80" fill="#999" /><rect x="531.00" y="21.00" width="5.00" height="0.80" fill="#999" /><rect x="541.00" y="20.80" width="23.00" height="1.20" fill="#8c8f96" /><rect x="568.00" y="21.00" width="2.00" height="0.80" fill="#bbb" /><rect x="576.00" y="20.60" width="1.40" height="1.60" fill="#ccc" /><rect x="699.00" y="21.00" width="12.00" height="3.60" fill="#2f5fd0" /><rect x="703.50" y="22.40" width="3.00" height="0.80" fill="#dfe8ff" /><rect x="682.5" y="21.3" width="4.6" height="2.8" rx="1.4" fill="#6b6fb5"/><rect x="690" y="21.3" width="5.2" height="2.8" rx="1" fill="#f3ead8"/><rect x="677.00" y="22.20" width="1.20" height="1.00" fill="#999" /><rect x="554.80" y="25.20" width="130.40" height="92.40" fill="#eef0f4" /><rect x="519.40" y="27.00" width="1.60" height="1.60" fill="#bbb" /><rect x="519.20" y="29.60" width="2.00" height="0.60" fill="#d0d0d0" /><rect x="519.40" y="34.60" width="1.60" height="1.60" fill="#ccc" /><rect x="519.20" y="37.20" width="2.00" height="0.60" fill="#d0d0d0" /><rect x="519.40" y="42.20" width="1.60" height="1.60" fill="#222" /><rect x="519.20" y="44.80" width="2.00" height="0.60" fill="#d0d0d0" /><rect x="519.40" y="49.80" width="1.60" height="1.60" fill="#999" /><rect x="519.20" y="52.40" width="2.00" height="0.60" fill="#d0d0d0" /><rect x="519.40" y="57.40" width="1.60" height="1.60" fill="#bbb" /><rect x="519.20" y="60.00" width="2.00" height="0.60" fill="#d0d0d0" /><rect x="519.40" y="65.00" width="1.60" height="1.60" fill="#aab" /><rect x="519.20" y="67.60" width="2.00" height="0.60" fill="#d0d0d0" /><rect x="519.40" y="72.60" width="1.60" height="1.60" fill="#bbb" /><rect x="519.20" y="75.20" width="2.00" height="0.60" fill="#d0d0d0" /><rect x="519.40" y="80.20" width="1.60" height="1.60" fill="#bbb" /><rect x="519.20" y="82.80" width="2.00" height="0.60" fill="#d0d0d0" /><rect x="519.40" y="87.80" width="1.60" height="1.60" fill="#bbb" /><rect x="519.20" y="90.40" width="2.00" height="0.60" fill="#d0d0d0" /><rect x="519.40" y="95.40" width="1.60" height="1.60" fill="#ccc" /><rect x="519.20" y="98.00" width="2.00" height="0.60" fill="#d0d0d0" /><rect x="527.00" y="29.60" width="8.00" height="0.70" fill="#d4d4d8" /><rect x="525.30" y="33.20" width="8.50" height="2.90" fill="#4a72c8" /><rect x="527.20" y="34.30" width="4.60" height="0.70" fill="#dfe6fa" /><rect x="535.60" y="33.60" width="5.00" height="2.20" fill="#e4e6ea" /><rect x="525.00" y="37.80" width="13.80" height="18.00" fill="#dca273" /><rect x="525.80" y="38.60" width="12.20" height="16.40" fill="#fbf0e2" /><rect x="526.60" y="39.40" width="10.60" height="2.00" fill="#f0b878" /><rect x="526.60" y="42.00" width="10.60" height="1.40" fill="#4a2f22" /><rect x="527.20" y="45.00" width="9.40" height="0.60" fill="#c49a7c" /><rect x="527.20" y="47.30" width="6.40" height="0.60" fill="#c49a7c" /><rect x="527.20" y="49.60" width="9.40" height="0.60" fill="#c49a7c" /><rect x="527.20" y="51.90" width="6.40" height="0.60" fill="#c49a7c" /><rect x="540.30" y="37.80" width="13.70" height="18.00" fill="#d9a07c" /><rect x="541.10" y="38.60" width="12.10" height="16.40" fill="#f6e9e4" /><rect x="541.90" y="39.40" width="10.50" height="2.00" fill="#c9806a" /><rect x="542.50" y="45.00" width="9.30" height="0.60" fill="#c49a7c" /><rect x="542.50" y="47.30" width="6.30" height="0.60" fill="#c49a7c" /><rect x="542.50" y="49.60" width="9.30" height="0.60" fill="#c49a7c" /><rect x="542.50" y="51.90" width="6.30" height="0.60" fill="#c49a7c" /><rect x="525.00" y="57.20" width="13.80" height="18.00" fill="#a8644c" /><rect x="525.80" y="58.00" width="12.20" height="16.40" fill="#f7ece4" /><rect x="526.60" y="58.80" width="10.60" height="2.00" fill="#7a4434" /><rect x="526.60" y="61.40" width="10.60" height="1.40" fill="#caa" /><rect x="527.20" y="64.40" width="9.40" height="0.60" fill="#c49a7c" /><rect x="527.20" y="66.70" width="6.40" height="0.60" fill="#c49a7c" /><rect x="527.20" y="69.00" width="9.40" height="0.60" fill="#c49a7c" /><rect x="527.20" y="71.30" width="6.40" height="0.60" fill="#c49a7c" /><rect x="540.30" y="57.20" width="13.70" height="18.00" fill="#e9cfc4" /><rect x="541.10" y="58.00" width="12.10" height="16.40" fill="#fbf4f0" /><rect x="541.90" y="58.80" width="10.50" height="2.00" fill="#e6b4a4" /><rect x="542.50" y="64.40" width="9.30" height="0.60" fill="#c49a7c" /><rect x="542.50" y="66.70" width="6.30" height="0.60" fill="#c49a7c" /><rect x="542.50" y="69.00" width="9.30" height="0.60" fill="#c49a7c" /><rect x="542.50" y="71.30" width="6.30" height="0.60" fill="#c49a7c" /><rect x="525.00" y="77.60" width="13.80" height="18.00" fill="#d8a890" /><rect x="525.80" y="78.40" width="12.20" height="16.40" fill="#fdf8f4" /><rect x="526.60" y="79.20" width="10.60" height="2.00" fill="#6a4a44" /><rect x="527.20" y="84.80" width="9.40" height="0.60" fill="#c49a7c" /><rect x="527.20" y="87.10" width="6.40" height="0.60" fill="#c49a7c" /><rect x="527.20" y="89.40" width="9.40" height="0.60" fill="#c49a7c" /><rect x="527.20" y="91.70" width="6.40" height="0.60" fill="#c49a7c" /><rect x="540.30" y="77.60" width="13.70" height="18.00" fill="#f0e3a8" /><rect x="541.10" y="78.40" width="12.10" height="16.40" fill="#fdf7da" /><rect x="541.90" y="79.20" width="10.50" height="2.00" fill="#eacb62" /><rect x="542.50" y="84.80" width="9.30" height="0.60" fill="#c49a7c" /><rect x="542.50" y="87.10" width="6.30" height="0.60" fill="#c49a7c" /><rect x="542.50" y="89.40" width="9.30" height="0.60" fill="#c49a7c" /><rect x="542.50" y="91.70" width="6.30" height="0.60" fill="#c49a7c" /><rect x="525.00" y="96.60" width="13.80" height="18.00" fill="#c49090" /><rect x="525.80" y="97.40" width="12.20" height="16.40" fill="#fbf4f4" /><rect x="526.60" y="98.20" width="10.60" height="2.00" fill="#6a3a4a" /><rect x="526.60" y="100.80" width="10.60" height="1.40" fill="#b0a0c0" /><rect x="527.20" y="103.80" width="9.40" height="0.60" fill="#c49a7c" /><rect x="527.20" y="106.10" width="6.40" height="0.60" fill="#c49a7c" /><rect x="527.20" y="108.40" width="9.40" height="0.60" fill="#c49a7c" /><rect x="527.20" y="110.70" width="6.40" height="0.60" fill="#c49a7c" /><rect x="540.30" y="96.60" width="13.70" height="18.00" fill="#cfd6de" /><rect x="541.10" y="97.40" width="12.10" height="16.40" fill="#f4f6f8" /><rect x="541.90" y="98.20" width="10.50" height="2.00" fill="#b8c0ca" /><rect x="542.50" y="103.80" width="9.30" height="0.60" fill="#aab2bc" /><rect x="542.50" y="106.10" width="6.30" height="0.60" fill="#aab2bc" /><rect x="542.50" y="108.40" width="9.30" height="0.60" fill="#aab2bc" /><rect x="542.50" y="110.70" width="6.30" height="0.60" fill="#aab2bc" /><rect x="525.00" y="116.00" width="13.80" height="1.60" fill="#a07068" /><rect x="525.80" y="116.80" width="12.20" height="0.00" fill="#f4e8e4" /><rect x="526.60" y="117.60" width="10.60" height="2.00" fill="#6a3a3a" /><rect x="527.20" y="123.20" width="9.40" height="0.60" fill="#c49a7c" /><rect x="527.20" y="125.50" width="6.40" height="0.60" fill="#c49a7c" /><rect x="527.20" y="127.80" width="9.40" height="0.60" fill="#c49a7c" /><rect x="527.20" y="130.10" width="6.40" height="0.60" fill="#c49a7c" /><rect x="540.30" y="116.00" width="13.70" height="1.60" fill="#d8c8b8" /><rect x="541.10" y="116.80" width="12.10" height="0.00" fill="#f6f0ea" /><rect x="541.90" y="117.60" width="10.50" height="2.00" fill="#b8a090" /><rect x="542.50" y="123.20" width="9.30" height="0.60" fill="#c49a7c" /><rect x="542.50" y="125.50" width="6.30" height="0.60" fill="#c49a7c" /><rect x="542.50" y="127.80" width="9.30" height="0.60" fill="#c49a7c" /><rect x="542.50" y="130.10" width="6.30" height="0.60" fill="#c49a7c" /><rect x="516.00" y="117.20" width="39.00" height="0.60" fill="#fff" /><rect x="558.50" y="114.00" width="10.50" height="1.00" fill="#b9bcc2" /><rect x="589.00" y="28.20" width="62.60" height="84.20" fill="#2d4a82" /><rect x="591.50" y="30.80" width="57.70" height="76.00" fill="#ffffff" /><rect x="591.50" y="41.50" width="57.70" height="5.50" fill="#0c0a08" /><rect x="591.50" y="45.70" width="57.70" height="1.30" fill="#cfae62" /><text x="620.40" y="38.90" font-size="6.1" fill="#0b0b0b" font-weight="900" text-anchor="middle" textLength="49.6" lengthAdjust="spacingAndGlyphs">防止企业优盘泄密</text><text x="620.40" y="45.30" font-size="2.9" fill="#e6c873" font-weight="bold" text-anchor="middle">拦截助手+系统</text><rect x="591.50" y="45.00" width="22.10" height="4.00" fill="#fbfbfb" /><rect x="593.20" y="46.50" width="1.40" height="1.10" fill="#bcbcbc" /><rect x="596.40" y="46.50" width="1.40" height="1.10" fill="#bcbcbc" /><rect x="599.60" y="46.50" width="1.40" height="1.10" fill="#bcbcbc" /><rect x="602.80" y="46.50" width="1.40" height="1.10" fill="#bcbcbc" /><rect x="606.00" y="46.50" width="1.40" height="1.10" fill="#bcbcbc" /><rect x="609.20" y="46.50" width="1.40" height="1.10" fill="#bcbcbc" /><rect x="592.00" y="51.20" width="21.50" height="2.70" fill="#7b1c24" /><text x="592.80" y="53.30" font-size="1.9" fill="#d8a8ac" textLength="19.8" lengthAdjust="spacingAndGlyphs">一、什么是优盘泄密风险</text><rect x="591.80" y="54.80" width="54.70" height="9.40" fill="none" stroke="#9db9ee" stroke-width="0.35"/><text x="592.60" y="57.60" font-size="2.15" fill="#222" textLength="52.5" lengthAdjust="spacingAndGlyphs">如果员工作中都会随时涉及到用到U盘，那么就要</text><text x="592.60" y="60.20" font-size="2.15" fill="#222" textLength="52.5" lengthAdjust="spacingAndGlyphs">想办法让U盘泄露，让电脑有核心文档，可以把实现</text><text x="592.60" y="62.80" font-size="2.15" fill="#222" textLength="25.5" lengthAdjust="spacingAndGlyphs">保险泄密各种管理软件。</text><rect x="618.00" y="65.60" width="0.60" height="1.40" fill="#aaa" /><text x="620.40" y="110.60" font-size="2.6" fill="#10214a" font-weight="bold" text-anchor="middle">▶ PDCA等级 获取中高层 ▶</text><rect x="685.20" y="25.20" width="28.10" height="92.40" fill="#ffffff" /><rect x="687.60" y="27.60" width="1.40" height="1.20" fill="#888" /><rect x="690.50" y="27.80" width="2.10" height="0.80" fill="#aaa" /><rect x="688.00" y="31.60" width="1.40" height="1.30" fill="#9aa0a8" /><rect x="691.90" y="31.60" width="1.40" height="1.30" fill="#9aa0a8" /><rect x="695.80" y="31.60" width="1.40" height="1.30" fill="#9aa0a8" /><rect x="699.70" y="31.60" width="1.40" height="1.30" fill="#9aa0a8" /><rect x="703.60" y="31.60" width="1.40" height="1.30" fill="#9aa0a8" /><rect x="707.50" y="31.60" width="1.40" height="1.30" fill="#9aa0a8" /><rect x="687.60" y="36.00" width="23.00" height="3.60" fill="#f1f2f4" /><rect x="697.50" y="37.40" width="3.50" height="0.80" fill="#8a8d92" /><rect x="687.60" y="40.60" width="23.00" height="3.80" fill="#f1f2f4" /><rect x="696.50" y="42.00" width="5.50" height="0.80" fill="#8a8d92" /><rect x="687.60" y="47.60" width="23.00" height="3.00" fill="#f4f5f7" /><rect x="688.60" y="48.70" width="8.40" height="0.70" fill="#9a9da2" /><rect x="706.50" y="48.60" width="1.50" height="1.00" fill="#777" /><rect x="688.30" y="53.40" width="1.60" height="1.40" fill="#8d9299" /><rect x="693.00" y="53.40" width="1.60" height="1.40" fill="#8d9299" /><rect x="697.70" y="53.40" width="1.60" height="1.40" fill="#8d9299" /><rect x="702.40" y="53.40" width="1.60" height="1.40" fill="#8d9299" /><rect x="707.10" y="53.40" width="1.60" height="1.40" fill="#8d9299" /><rect x="688.30" y="58.00" width="1.60" height="1.40" fill="#8d9299" /><rect x="693.00" y="58.00" width="1.60" height="1.40" fill="#8d9299" /><rect x="697.70" y="58.00" width="1.60" height="1.40" fill="#8d9299" /><rect x="702.40" y="58.00" width="1.60" height="1.40" fill="#8d9299" /><rect x="707.10" y="58.00" width="1.60" height="1.40" fill="#8d9299" /><rect x="688.30" y="62.60" width="1.60" height="1.40" fill="#b4b8be" /><rect x="693.00" y="62.60" width="1.60" height="1.40" fill="#b4b8be" /><rect x="697.70" y="62.60" width="1.60" height="1.40" fill="#b4b8be" /><rect x="702.40" y="62.60" width="1.60" height="1.40" fill="#b4b8be" /><rect x="707.10" y="62.60" width="1.60" height="1.40" fill="#b4b8be" /><rect x="702.00" y="57.20" width="3.40" height="3.20" fill="#e4e6ea" /><rect x="687.80" y="67.60" width="2.40" height="2.60" fill="#111" /><rect x="691.00" y="68.40" width="4.00" height="0.80" fill="#999" /><rect x="700.50" y="68.00" width="1.50" height="1.40" fill="#999" /><rect x="703.50" y="68.40" width="4.50" height="0.80" fill="#888" /><rect x="687.60" y="73.60" width="23.00" height="5.80" fill="#f3f4f6" /><circle cx="690.6" cy="76.5" r="1.9" fill="#fff"/><rect x="695.00" y="76.10" width="3.00" height="0.80" fill="#777" /><rect x="687.60" y="82.60" width="23.00" height="5.80" fill="#f3f4f6" /><circle cx="690.6" cy="85.5" r="1.9" fill="#fff"/><rect x="695.00" y="85.10" width="3.00" height="0.80" fill="#777" /><rect x="708.60" y="85.00" width="1.00" height="1.00" fill="#999" /><rect x="687.60" y="93.00" width="3.00" height="0.80" fill="#c4c6ca" /><rect x="708.60" y="93.00" width="0.80" height="0.80" fill="#ddd" /><rect x="687.60" y="99.70" width="3.00" height="0.80" fill="#c4c6ca" /><rect x="708.60" y="99.70" width="0.80" height="0.80" fill="#ddd" /><rect x="687.60" y="106.40" width="3.00" height="0.80" fill="#c4c6ca" /><rect x="708.60" y="106.40" width="0.80" height="0.80" fill="#ddd" /><rect x="687.60" y="113.10" width="3.00" height="0.80" fill="#c4c6ca" /><rect x="708.60" y="113.10" width="0.80" height="0.80" fill="#ddd" /><rect x="675.00" y="114.00" width="3.00" height="0.80" fill="#bbb" /><rect x="682.00" y="114.00" width="1.00" height="0.80" fill="#bbb" /><rect x="516.0" y="117.6" width="197.3" height="4.90" fill="url(#t3task)"/><rect x="517.60" y="119.00" width="1.80" height="2.00" fill="#aab4b8" /><rect x="586.60" y="118.80" width="1.80" height="2.40" fill="#5a9ac8" /><rect x="591.00" y="119.60" width="5.50" height="0.80" fill="#889" /><rect x="607.50" y="118.90" width="2.10" height="2.30" fill="#888" /><rect x="612.10" y="118.90" width="2.10" height="2.30" fill="#345" /><rect x="616.70" y="118.90" width="2.10" height="2.30" fill="#334" /><rect x="621.30" y="118.90" width="2.10" height="2.30" fill="#5b8" /><rect x="625.90" y="118.90" width="2.10" height="2.30" fill="#3a7" /><rect x="630.50" y="118.90" width="2.10" height="2.30" fill="#c9a" /><rect x="635.10" y="118.90" width="2.10" height="2.30" fill="#d9b" /><rect x="639.70" y="118.90" width="2.10" height="2.30" fill="#759" /><rect x="689.00" y="119.50" width="1.20" height="1.30" fill="#8c9098" /><rect x="691.60" y="119.50" width="1.20" height="1.30" fill="#8c9098" /><rect x="694.20" y="119.50" width="1.20" height="1.30" fill="#8c9098" /><rect x="696.80" y="119.50" width="1.20" height="1.30" fill="#8c9098" /><rect x="699.40" y="119.50" width="1.20" height="1.30" fill="#8c9098" /><rect x="702.00" y="119.50" width="1.20" height="1.30" fill="#8c9098" /><rect x="704.60" y="119.50" width="1.20" height="1.30" fill="#8c9098" /><rect x="706.00" y="119.00" width="6.00" height="2.20" fill="#d6d8c8" /></svg>
<svg class="thumb" style="left:24.4px;top:137.2px" width="197.3" height="110.3" viewBox="24.4 137.2 197.3 110.3"><defs><linearGradient id="t4task" x1="0" x2="1" y1="0" y2="0"><stop offset="0" stop-color="#e6ebc6"/><stop offset="0.25" stop-color="#e0e8cc"/><stop offset="0.5" stop-color="#dfe3e2"/><stop offset="0.8" stop-color="#e2e6dc"/><stop offset="1" stop-color="#e8efcc"/></linearGradient></defs><rect x="24.40" y="137.20" width="197.30" height="110.30" fill="#ffffff" /><rect x="24.40" y="137.20" width="197.30" height="2.90" fill="#c9cacc" /><rect x="53.60" y="137.50" width="24.40" height="2.60" fill="#f4f5f6" /><rect x="25.60" y="138.00" width="1.80" height="1.40" fill="#8a8c90" /><rect x="29.00" y="138.30" width="23.00" height="0.80" fill="#6f7175" /><rect x="82.00" y="138.30" width="28.00" height="0.80" fill="#6f7175" /><rect x="55.10" y="138.40" width="18.90" height="0.70" fill="#55585c" /><rect x="24.40" y="140.10" width="197.30" height="3.50" fill="#fbfbfc" /><rect x="37.40" y="140.80" width="117.00" height="2.10" fill="#eff1f3" /><rect x="40.40" y="141.50" width="17.00" height="0.70" fill="#5c5f63" /><rect x="57.40" y="141.50" width="29.00" height="0.70" fill="#b4b7bb" /><rect x="30.90" y="141.20" width="1.30" height="1.30" fill="#aaa" /><rect x="191.70" y="141.20" width="1.20" height="1.20" fill="#8f96a0" /><rect x="194.90" y="141.20" width="1.20" height="1.20" fill="#8f96a0" /><rect x="198.10" y="141.20" width="1.20" height="1.20" fill="#8f96a0" /><rect x="201.30" y="141.20" width="1.20" height="1.20" fill="#8f96a0" /><rect x="217.70" y="141.00" width="1.60" height="1.60" fill="#5577aa" /><rect x="24.40" y="143.80" width="197.30" height="4.00" fill="#fcfcfd" /><rect x="26.00" y="145.40" width="1.00" height="1.00" fill="#667" /><rect x="27.60" y="145.50" width="5.40" height="0.80" fill="#8a8d92" /><rect x="37.00" y="145.40" width="1.00" height="1.00" fill="#667" /><rect x="38.60" y="145.50" width="8.40" height="0.80" fill="#8a8d92" /><rect x="51.50" y="145.40" width="1.00" height="1.00" fill="#667" /><rect x="53.10" y="145.50" width="7.90" height="0.80" fill="#8a8d92" /><rect x="67.00" y="145.40" width="1.00" height="1.00" fill="#667" /><rect x="68.60" y="145.50" width="9.40" height="0.80" fill="#8a8d92" /><rect x="84.00" y="145.40" width="1.00" height="1.00" fill="#667" /><rect x="85.60" y="145.50" width="11.40" height="0.80" fill="#8a8d92" /><rect x="99.00" y="145.40" width="1.00" height="1.00" fill="#667" /><rect x="100.60" y="145.50" width="10.40" height="0.80" fill="#8a8d92" /><rect x="114.00" y="145.40" width="1.00" height="1.00" fill="#667" /><rect x="115.60" y="145.50" width="8.40" height="0.80" fill="#8a8d92" /><rect x="24.40" y="148.00" width="197.30" height="5.20" fill="#ffffff" /><rect x="27.40" y="149.60" width="1.60" height="1.60" fill="#778" /><rect x="32.00" y="150.00" width="3.00" height="0.80" fill="#999" /><rect x="39.00" y="150.00" width="5.00" height="0.80" fill="#999" /><rect x="49.50" y="149.80" width="18.50" height="1.20" fill="#8c8f96" /><rect x="73.60" y="149.60" width="1.40" height="1.60" fill="#ccc" /><rect x="207.00" y="149.30" width="12.00" height="3.50" fill="#2f5fd0" /><rect x="211.50" y="150.60" width="3.00" height="0.80" fill="#dfe8ff" /><rect x="191" y="149.6" width="4" height="2.8" rx="1.4" fill="#7a7ea8"/><rect x="198.5" y="149.7" width="5" height="2.6" rx="1" fill="#eeeef0"/><rect x="185.60" y="150.40" width="1.20" height="1.00" fill="#999" /><rect x="63.50" y="153.20" width="129.70" height="89.00" fill="#eef0f4" /><rect x="27.60" y="155.60" width="1.60" height="1.60" fill="#bbb" /><rect x="27.40" y="158.20" width="2.00" height="0.60" fill="#d0d0d0" /><rect x="27.60" y="163.20" width="1.60" height="1.60" fill="#ccc" /><rect x="27.40" y="165.80" width="2.00" height="0.60" fill="#d0d0d0" /><rect x="27.60" y="170.80" width="1.60" height="1.60" fill="#222" /><rect x="27.40" y="173.40" width="2.00" height="0.60" fill="#d0d0d0" /><rect x="27.60" y="178.40" width="1.60" height="1.60" fill="#999" /><rect x="27.40" y="181.00" width="2.00" height="0.60" fill="#d0d0d0" /><rect x="27.60" y="186.00" width="1.60" height="1.60" fill="#bbb" /><rect x="27.40" y="188.60" width="2.00" height="0.60" fill="#d0d0d0" /><rect x="27.60" y="193.60" width="1.60" height="1.60" fill="#aab" /><rect x="27.40" y="196.20" width="2.00" height="0.60" fill="#d0d0d0" /><rect x="27.60" y="201.20" width="1.60" height="1.60" fill="#bbb" /><rect x="27.40" y="203.80" width="2.00" height="0.60" fill="#d0d0d0" /><rect x="27.60" y="208.80" width="1.60" height="1.60" fill="#bbb" /><rect x="27.40" y="211.40" width="2.00" height="0.60" fill="#d0d0d0" /><rect x="27.60" y="216.40" width="1.60" height="1.60" fill="#bbb" /><rect x="27.40" y="219.00" width="2.00" height="0.60" fill="#d0d0d0" /><rect x="27.60" y="224.00" width="1.60" height="1.60" fill="#ccc" /><rect x="27.40" y="226.60" width="2.00" height="0.60" fill="#d0d0d0" /><rect x="27.60" y="231.60" width="1.60" height="1.60" fill="#ccc" /><rect x="27.40" y="234.20" width="2.00" height="0.60" fill="#d0d0d0" /><rect x="35.40" y="158.00" width="8.00" height="0.70" fill="#d4d4d8" /><rect x="33.80" y="161.80" width="8.00" height="3.00" fill="#4a72c8" /><rect x="35.60" y="162.90" width="4.40" height="0.70" fill="#dfe6fa" /><rect x="43.60" y="162.20" width="5.00" height="2.20" fill="#e4e6ea" /><rect x="33.80" y="166.20" width="13.40" height="18.00" fill="#f2e6c4" /><rect x="34.50" y="166.90" width="12.00" height="16.60" fill="#fbf5e0" /><rect x="35.80" y="168.00" width="9.40" height="1.60" fill="#b8944a" /><rect x="36.00" y="171.80" width="9.00" height="0.60" fill="#c8b078" /><rect x="36.00" y="174.10" width="6.00" height="0.60" fill="#c8b078" /><rect x="36.00" y="176.40" width="9.00" height="0.60" fill="#c8b078" /><rect x="36.00" y="178.70" width="6.00" height="0.60" fill="#c8b078" /><rect x="36.00" y="181.00" width="9.00" height="0.60" fill="#c8b078" /><rect x="48.30" y="166.20" width="14.00" height="18.00" fill="#4f8fac" /><rect x="49.00" y="166.90" width="12.60" height="16.60" fill="#f0f7fa" /><rect x="50.30" y="168.00" width="10.00" height="1.60" fill="#2d4a60" /><rect x="50.50" y="171.80" width="9.60" height="0.60" fill="#8ab4c8" /><rect x="50.50" y="174.10" width="6.60" height="0.60" fill="#8ab4c8" /><rect x="50.50" y="176.40" width="9.60" height="0.60" fill="#8ab4c8" /><rect x="50.50" y="178.70" width="6.60" height="0.60" fill="#8ab4c8" /><rect x="50.50" y="181.00" width="9.60" height="0.60" fill="#8ab4c8" /><rect x="33.80" y="185.60" width="13.40" height="18.00" fill="#eee0b8" /><rect x="34.50" y="186.30" width="12.00" height="16.60" fill="#faf2da" /><rect x="35.80" y="187.40" width="9.40" height="1.60" fill="#a88430" /><rect x="36.00" y="191.20" width="9.00" height="0.60" fill="#c4ac68" /><rect x="36.00" y="193.50" width="6.00" height="0.60" fill="#c4ac68" /><rect x="36.00" y="195.80" width="9.00" height="0.60" fill="#c4ac68" /><rect x="36.00" y="198.10" width="6.00" height="0.60" fill="#c4ac68" /><rect x="36.00" y="200.40" width="9.00" height="0.60" fill="#c4ac68" /><rect x="48.30" y="185.60" width="14.00" height="18.00" fill="#ecdcc0" /><rect x="49.00" y="186.30" width="12.60" height="16.60" fill="#f8f2e2" /><rect x="50.30" y="187.40" width="10.00" height="1.60" fill="#5a4a2a" /><rect x="50.50" y="191.20" width="9.60" height="0.60" fill="#bca880" /><rect x="50.50" y="193.50" width="6.60" height="0.60" fill="#bca880" /><rect x="50.50" y="195.80" width="9.60" height="0.60" fill="#bca880" /><rect x="50.50" y="198.10" width="6.60" height="0.60" fill="#bca880" /><rect x="50.50" y="200.40" width="9.60" height="0.60" fill="#bca880" /><rect x="33.80" y="205.80" width="13.40" height="18.00" fill="#8fa8c0" /><rect x="34.50" y="206.50" width="12.00" height="16.60" fill="#f0f5f9" /><rect x="35.80" y="207.60" width="9.40" height="1.60" fill="#4a6a88" /><rect x="36.00" y="211.40" width="9.00" height="0.60" fill="#90a8c0" /><rect x="36.00" y="213.70" width="6.00" height="0.60" fill="#90a8c0" /><rect x="36.00" y="216.00" width="9.00" height="0.60" fill="#90a8c0" /><rect x="36.00" y="218.30" width="6.00" height="0.60" fill="#90a8c0" /><rect x="36.00" y="220.60" width="9.00" height="0.60" fill="#90a8c0" /><rect x="48.30" y="205.80" width="14.00" height="18.00" fill="#e8d098" /><rect x="49.00" y="206.50" width="12.60" height="16.60" fill="#faf0d0" /><rect x="50.30" y="207.60" width="10.00" height="1.60" fill="#b89030" /><rect x="50.50" y="211.40" width="9.60" height="0.60" fill="#c8ac58" /><rect x="50.50" y="213.70" width="6.60" height="0.60" fill="#c8ac58" /><rect x="50.50" y="216.00" width="9.60" height="0.60" fill="#c8ac58" /><rect x="50.50" y="218.30" width="6.60" height="0.60" fill="#c8ac58" /><rect x="50.50" y="220.60" width="9.60" height="0.60" fill="#c8ac58" /><rect x="33.80" y="225.00" width="13.40" height="17.20" fill="#98a8c0" /><rect x="34.50" y="225.70" width="12.00" height="15.80" fill="#f2f5f9" /><rect x="35.80" y="226.80" width="9.40" height="1.60" fill="#5a6a88" /><rect x="36.00" y="230.60" width="9.00" height="0.60" fill="#8098b8" /><rect x="36.00" y="232.90" width="6.00" height="0.60" fill="#8098b8" /><rect x="36.00" y="235.20" width="9.00" height="0.60" fill="#8098b8" /><rect x="36.00" y="237.50" width="6.00" height="0.60" fill="#8098b8" /><rect x="36.00" y="239.80" width="9.00" height="0.60" fill="#8098b8" /><rect x="48.30" y="225.00" width="14.00" height="17.20" fill="#e0b8b8" /><rect x="49.00" y="225.70" width="12.60" height="15.80" fill="#faf0f0" /><rect x="50.30" y="226.80" width="10.00" height="1.60" fill="#b85a5a" /><rect x="50.50" y="230.60" width="9.60" height="0.60" fill="#78a8c8" /><rect x="50.50" y="232.90" width="6.60" height="0.60" fill="#78a8c8" /><rect x="50.50" y="235.20" width="9.60" height="0.60" fill="#78a8c8" /><rect x="50.50" y="237.50" width="6.60" height="0.60" fill="#78a8c8" /><rect x="50.50" y="239.80" width="9.60" height="0.60" fill="#78a8c8" /><rect x="67.00" y="239.00" width="10.00" height="0.80" fill="#b9bcc2" /><rect x="98.60" y="156.60" width="60.60" height="80.60" fill="#b3daf6" /><rect x="102.4" y="162" width="52.6" height="71.2" rx="3" fill="#ffffff" stroke="#3c86d0" stroke-width="0.9"/><rect x="106.90" y="159.8" width="1.0" height="4.6" rx="0.5" fill="#1d3358"/><rect x="109.90" y="159.8" width="1.0" height="4.6" rx="0.5" fill="#1d3358"/><rect x="112.90" y="159.8" width="1.0" height="4.6" rx="0.5" fill="#1d3358"/><rect x="115.90" y="159.8" width="1.0" height="4.6" rx="0.5" fill="#1d3358"/><rect x="118.90" y="159.8" width="1.0" height="4.6" rx="0.5" fill="#1d3358"/><rect x="121.90" y="159.8" width="1.0" height="4.6" rx="0.5" fill="#1d3358"/><rect x="124.90" y="159.8" width="1.0" height="4.6" rx="0.5" fill="#1d3358"/><rect x="127.90" y="159.8" width="1.0" height="4.6" rx="0.5" fill="#1d3358"/><rect x="130.90" y="159.8" width="1.0" height="4.6" rx="0.5" fill="#1d3358"/><rect x="133.90" y="159.8" width="1.0" height="4.6" rx="0.5" fill="#1d3358"/><rect x="136.90" y="159.8" width="1.0" height="4.6" rx="0.5" fill="#1d3358"/><rect x="139.90" y="159.8" width="1.0" height="4.6" rx="0.5" fill="#1d3358"/><rect x="142.90" y="159.8" width="1.0" height="4.6" rx="0.5" fill="#1d3358"/><rect x="145.90" y="159.8" width="1.0" height="4.6" rx="0.5" fill="#1d3358"/><rect x="148.90" y="159.8" width="1.0" height="4.6" rx="0.5" fill="#1d3358"/><text x="129.00" y="173.50" font-size="6.0" fill="#141414" font-weight="900" text-anchor="middle" textLength="36.6" lengthAdjust="spacingAndGlyphs">告别情绪焦虑</text><rect x="118.8" y="175.3" width="19.5" height="3.4" rx="1.7" fill="#f6d84c"/><text x="128.50" y="177.90" font-size="2.3" fill="#222" font-weight="bold" text-anchor="middle">正确的做方法</text><circle cx="150.6" cy="177.6" r="2.2" fill="#9fd4f4"/><circle cx="150.6" cy="177.6" r="1" fill="#e8f6ff"/><rect x="106.40" y="175.40" width="1.60" height="3.00" fill="#e8a860" /><rect x="106.3" y="181.6" width="13.8" height="2.8" rx="1.4" fill="#f2b27a"/><text x="113.20" y="183.65" font-size="1.8" fill="#fff4e6" text-anchor="middle" font-weight="bold">焦虑的根源</text><text x="106.30" y="187.40" font-size="1.95" fill="#2a2e34" textLength="46.2" lengthAdjust="spacingAndGlyphs">我们之所以焦虑，是因为对未来的不确定性感到担忧和恐惧，害怕失去</text><text x="106.30" y="189.85" font-size="1.95" fill="#2a2e34" textLength="30.7" lengthAdjust="spacingAndGlyphs">控制，学会接纳不确定性，专注当下能做的事。</text><rect x="106.3" y="192.7" width="13.8" height="2.8" rx="1.4" fill="#f2b27a"/><text x="113.20" y="194.75" font-size="1.8" fill="#fff4e6" text-anchor="middle" font-weight="bold">转移注意力</text><text x="106.30" y="198.30" font-size="1.95" fill="#2a2e34" textLength="46.2" lengthAdjust="spacingAndGlyphs">当焦虑来袭时，可以尝试运动、听音乐、与朋友聊天等方式，转移注意</text><text x="106.30" y="200.75" font-size="1.95" fill="#2a2e34" textLength="41.7" lengthAdjust="spacingAndGlyphs">力，让大脑从焦虑的循环中跳出来，重新获得平静的感觉。</text><rect x="106.3" y="203.6" width="13.8" height="2.8" rx="1.4" fill="#f2b27a"/><text x="113.20" y="205.65" font-size="1.8" fill="#fff4e6" text-anchor="middle" font-weight="bold">建立规律作息</text><text x="106.30" y="209.10" font-size="1.95" fill="#2a2e34" textLength="46.2" lengthAdjust="spacingAndGlyphs">保持规律的作息、充足的睡眠，以及健康的饮食习惯都能帮助缓解</text><text x="106.30" y="211.55" font-size="1.95" fill="#2a2e34" textLength="27.7" lengthAdjust="spacingAndGlyphs">焦虑，让身心保持稳定的状态。</text><circle cx="156.6" cy="222.6" r="1.8" fill="#f2c266"/><rect x="193.20" y="153.20" width="28.50" height="89.00" fill="#ffffff" /><rect x="195.40" y="156.00" width="2.60" height="1.00" fill="#555" /><rect x="195.60" y="159.60" width="1.40" height="1.40" fill="#a0a4aa" /><rect x="199.20" y="159.60" width="1.40" height="1.40" fill="#a0a4aa" /><rect x="202.80" y="159.60" width="1.40" height="1.40" fill="#a0a4aa" /><rect x="195.40" y="165.60" width="2.60" height="0.90" fill="#666" /><rect x="209.00" y="165.80" width="9.00" height="0.60" fill="#d0d0d4" /><rect x="195.40" y="168.80" width="10.60" height="3.60" fill="#f1f2f4" /><rect x="198.50" y="170.20" width="4.50" height="0.80" fill="#8a8d92" /><rect x="207.40" y="168.80" width="11.40" height="3.60" fill="#f1f2f4" /><rect x="210.50" y="170.20" width="4.90" height="0.80" fill="#8a8d92" /><rect x="195.40" y="176.60" width="4.20" height="1.00" fill="#555" /><rect x="195.40" y="179.60" width="23.60" height="12.40" fill="#f2f3f5" /><rect x="204.00" y="181.40" width="6.60" height="9.40" fill="#b6dcf6" /><rect x="212.00" y="181.60" width="1.00" height="1.00" fill="#c8ccd2" /><rect x="214.20" y="181.60" width="1.00" height="1.00" fill="#c8ccd2" /><rect x="216.40" y="181.60" width="1.00" height="1.00" fill="#c8ccd2" /><rect x="196.60" y="195.60" width="1.80" height="1.40" fill="#9ea3aa" /><rect x="202.80" y="195.60" width="1.80" height="1.40" fill="#9ea3aa" /><rect x="209.00" y="195.60" width="1.80" height="1.40" fill="#9ea3aa" /><rect x="215.20" y="195.60" width="1.80" height="1.40" fill="#9ea3aa" /><rect x="196.60" y="200.00" width="1.80" height="1.40" fill="#c4c8ce" /><rect x="202.80" y="200.00" width="1.80" height="1.40" fill="#c4c8ce" /><rect x="209.00" y="200.00" width="1.80" height="1.40" fill="#c4c8ce" /><rect x="215.20" y="200.00" width="1.80" height="1.40" fill="#c4c8ce" /><rect x="196.60" y="204.40" width="1.80" height="1.40" fill="#9ea3aa" /><rect x="202.80" y="204.40" width="1.80" height="1.40" fill="#9ea3aa" /><rect x="209.00" y="204.40" width="1.80" height="1.40" fill="#9ea3aa" /><rect x="196.60" y="208.80" width="1.80" height="1.40" fill="#c4c8ce" /><rect x="202.80" y="208.80" width="1.80" height="1.40" fill="#c4c8ce" /><rect x="209.00" y="208.80" width="1.80" height="1.40" fill="#c4c8ce" /><rect x="195.40" y="214.60" width="5.20" height="1.00" fill="#777" /><rect x="203.00" y="215.00" width="11.00" height="0.50" fill="#d8dade" /><rect x="216.40" y="214.40" width="2.00" height="1.40" fill="#c0c4ca" /><rect x="195.40" y="220.80" width="4.00" height="1.00" fill="#555" /><rect x="195.40" y="225.20" width="5.20" height="1.00" fill="#777" /><rect x="203.00" y="225.60" width="11.00" height="0.50" fill="#d8dade" /><rect x="216.40" y="225.00" width="2.00" height="1.40" fill="#c0c4ca" /><rect x="183.00" y="238.60" width="3.00" height="0.80" fill="#bbb" /><rect x="190.00" y="238.60" width="1.00" height="0.80" fill="#bbb" /><rect x="24.4" y="242.2" width="197.3" height="5.30" fill="url(#t4task)"/><rect x="26.20" y="243.60" width="2.40" height="2.40" fill="#c8a838" /><rect x="96.00" y="243.40" width="2.00" height="2.40" fill="#6a8a9a" /><rect x="101.00" y="244.20" width="5.00" height="0.80" fill="#99a" /><rect x="118.00" y="243.60" width="2.00" height="2.20" fill="#9a9a8a" /><rect x="124.00" y="243.50" width="2.00" height="2.30" fill="#444" /><rect x="128.60" y="243.50" width="2.00" height="2.30" fill="#cb5" /><rect x="133.20" y="243.50" width="2.00" height="2.30" fill="#567" /><rect x="137.80" y="243.50" width="2.00" height="2.30" fill="#556" /><rect x="142.40" y="243.50" width="2.00" height="2.30" fill="#345" /><rect x="147.00" y="243.50" width="2.00" height="2.30" fill="#8a9" /><rect x="188.00" y="244.00" width="1.20" height="1.40" fill="#a8b088" /><rect x="190.70" y="244.00" width="1.20" height="1.40" fill="#a8b088" /><rect x="193.40" y="244.00" width="1.20" height="1.40" fill="#a8b088" /><rect x="196.10" y="244.00" width="1.20" height="1.40" fill="#a8b088" /><rect x="198.80" y="244.00" width="1.20" height="1.40" fill="#a8b088" /><rect x="201.50" y="244.00" width="1.20" height="1.40" fill="#a8b088" /><rect x="204.20" y="244.00" width="1.20" height="1.40" fill="#a8b088" /><rect x="206.90" y="244.00" width="1.20" height="1.40" fill="#a8b088" /><rect x="209.60" y="244.00" width="1.20" height="1.40" fill="#a8b088" /><rect x="213.00" y="243.50" width="7.00" height="2.30" fill="#d2dab4" /></svg>
<svg class="thumb" style="left:270.0px;top:137.2px" width="197.3" height="110.3" viewBox="270.0 137.2 197.3 110.3"><defs><linearGradient id="t5task" x1="0" x2="1" y1="0" y2="0"><stop offset="0" stop-color="#e4e6ea"/><stop offset="0.13" stop-color="#e8e6d6"/><stop offset="0.17" stop-color="#f2ecc4"/><stop offset="0.24" stop-color="#e6eaf0"/><stop offset="0.6" stop-color="#e6ebf2"/><stop offset="0.9" stop-color="#eceee4"/><stop offset="1" stop-color="#f0f0d8"/></linearGradient></defs><rect x="270.00" y="137.20" width="197.30" height="110.30" fill="#ffffff" /><rect x="367.40" y="145.90" width="99.90" height="3.70" fill="#e2e6ee" /><rect x="367.40" y="149.60" width="99.90" height="3.80" fill="#f8f8fa" /><rect x="452.00" y="150.80" width="5.00" height="0.80" fill="#aaa" /><rect x="460.00" y="150.80" width="4.50" height="0.80" fill="#aaa" /><rect x="372.00" y="143.40" width="6.00" height="0.60" fill="#bbb" /><rect x="367.40" y="153.40" width="99.40" height="89.10" fill="#8b8b8b" /><rect x="466.80" y="153.40" width="0.50" height="89.10" fill="#f4f4f4" /><path d="M422 139.4 h8.2 l-0.8 3.6 h-8.2 z" fill="#e2483a"/><rect x="423.50" y="140.30" width="4.50" height="0.90" fill="#fbe4e0" /><circle cx="419.6" cy="142" r="1.1" fill="none" stroke="#556" stroke-width="0.4"/><rect x="432.00" y="140.00" width="1.60" height="1.60" fill="#556" /><rect x="431.60" y="142.60" width="2.40" height="0.60" fill="#bbb" /><rect x="436.60" y="140.00" width="1.60" height="1.60" fill="#67a" /><rect x="436.20" y="142.60" width="2.40" height="0.60" fill="#bbb" /><rect x="441.00" y="140.00" width="1.60" height="1.60" fill="#889" /><rect x="440.60" y="142.60" width="2.40" height="0.60" fill="#bbb" /><rect x="446.00" y="140.00" width="1.60" height="1.60" fill="#c55" /><rect x="445.60" y="142.60" width="2.40" height="0.60" fill="#bbb" /><rect x="450" y="140.6" width="8.2" height="3.2" rx="1.6" fill="#f0b07a"/><rect x="452.00" y="141.80" width="4.40" height="0.70" fill="#fff3e6" /><circle cx="463" cy="142.2" r="1.7" fill="#2d3c78"/><rect x="369.00" y="156.30" width="3.00" height="1.00" fill="#505050" /><rect x="374.50" y="156.30" width="3.00" height="1.00" fill="#505050" /><rect x="380.50" y="156.30" width="3.00" height="1.00" fill="#505050" /><rect x="386.50" y="156.30" width="3.00" height="1.00" fill="#505050" /><rect x="395.00" y="156.30" width="7.00" height="1.00" fill="#505050" /><rect x="444.00" y="156.40" width="12.00" height="0.80" fill="#777" /><circle cx="460.2" cy="156.8" r="1.9" fill="#3d4a8a"/><rect x="370.00" y="162.00" width="1.60" height="1.40" fill="#6a6a6a" /><rect x="373.50" y="162.00" width="1.60" height="1.40" fill="#6a6a6a" /><rect x="377.00" y="162.00" width="1.60" height="1.40" fill="#6a6a6a" /><rect x="380.50" y="162.00" width="1.60" height="1.40" fill="#6a6a6a" /><rect x="384.00" y="162.00" width="1.60" height="1.40" fill="#6a6a6a" /><rect x="387.50" y="162.00" width="1.60" height="1.40" fill="#6a6a6a" /><rect x="391.00" y="162.00" width="1.60" height="1.40" fill="#6a6a6a" /><rect x="394.50" y="162.00" width="1.60" height="1.40" fill="#6a6a6a" /><rect x="398.00" y="162.00" width="1.60" height="1.40" fill="#6a6a6a" /><rect x="401.50" y="162.00" width="1.60" height="1.40" fill="#6a6a6a" /><rect x="405.00" y="162.00" width="1.60" height="1.40" fill="#6a6a6a" /><rect x="408.50" y="162.00" width="1.60" height="1.40" fill="#6a6a6a" /><rect x="412.00" y="162.00" width="1.60" height="1.40" fill="#6a6a6a" /><rect x="415.50" y="162.00" width="1.60" height="1.40" fill="#6a6a6a" /><rect x="419.00" y="162.00" width="1.60" height="1.40" fill="#6a6a6a" /><rect x="422.50" y="162.00" width="1.60" height="1.40" fill="#6a6a6a" /><rect x="426.00" y="162.00" width="1.60" height="1.40" fill="#6a6a6a" /><rect x="429.50" y="162.00" width="1.60" height="1.40" fill="#6a6a6a" /><rect x="425.60" y="169.00" width="5.40" height="1.20" fill="#444" /><rect x="437.50" y="169.00" width="5.50" height="1.20" fill="#555" /><rect x="424.00" y="175.00" width="8.00" height="0.80" fill="#5a5a5a" /><rect x="424.00" y="180.00" width="7.00" height="0.80" fill="#666" /><rect x="424.00" y="184.40" width="2.40" height="1.40" fill="#6c6c6c" /><rect x="428.30" y="184.40" width="2.40" height="1.40" fill="#6c6c6c" /><rect x="432.60" y="184.40" width="2.40" height="1.40" fill="#6c6c6c" /><rect x="436.90" y="184.40" width="2.40" height="1.40" fill="#6c6c6c" /><rect x="431.20" y="196.00" width="6.60" height="10.60" fill="#a4a4a4" /><rect x="431.80" y="198.20" width="1.00" height="1.10" fill="#777" /><rect x="431.80" y="199.80" width="1.00" height="1.10" fill="#777" /><rect x="431.80" y="203.00" width="1.00" height="1.10" fill="#777" /><rect x="431.80" y="204.60" width="1.00" height="1.10" fill="#777" /><rect x="433.30" y="196.60" width="1.00" height="1.10" fill="#777" /><rect x="433.30" y="199.80" width="1.00" height="1.10" fill="#777" /><rect x="433.30" y="201.40" width="1.00" height="1.10" fill="#777" /><rect x="433.30" y="204.60" width="1.00" height="1.10" fill="#777" /><rect x="434.80" y="196.60" width="1.00" height="1.10" fill="#777" /><rect x="434.80" y="198.20" width="1.00" height="1.10" fill="#777" /><rect x="434.80" y="201.40" width="1.00" height="1.10" fill="#777" /><rect x="434.80" y="203.00" width="1.00" height="1.10" fill="#777" /><rect x="436.30" y="198.20" width="1.00" height="1.10" fill="#777" /><rect x="436.30" y="199.80" width="1.00" height="1.10" fill="#777" /><rect x="436.30" y="203.00" width="1.00" height="1.10" fill="#777" /><rect x="436.30" y="204.60" width="1.00" height="1.10" fill="#777" /><rect x="425.50" y="196.00" width="1.00" height="10.00" fill="#7c7c7c" /><rect x="428.40" y="196.00" width="0.80" height="10.00" fill="#7c7c7c" /><rect x="423.50" y="213.40" width="6.50" height="1.00" fill="#3a3a3a" /><rect x="423.50" y="216.40" width="18.50" height="0.80" fill="#555" /><rect x="423.50" y="219.00" width="8.50" height="0.80" fill="#555" /><rect x="441.00" y="223.40" width="5.50" height="0.80" fill="#999" /><rect x="461.00" y="210.00" width="2.40" height="2.00" fill="#9a9a9a" /><rect x="461.00" y="217.60" width="2.40" height="2.00" fill="#9a9a9a" /><rect x="461.00" y="225.20" width="2.40" height="2.00" fill="#9a9a9a" /><rect x="461.00" y="232.80" width="2.40" height="2.00" fill="#9a9a9a" /><circle cx="371.6" cy="237.3" r="2.1" fill="#2a3780"/><rect x="380.50" y="235.80" width="1.40" height="1.40" fill="#5a5a5a" /><rect x="379.50" y="239.40" width="3.40" height="0.80" fill="#707070" /><rect x="390.00" y="235.80" width="1.40" height="1.40" fill="#5a5a5a" /><rect x="389.00" y="239.40" width="3.40" height="0.80" fill="#707070" /><rect x="399.50" y="235.80" width="1.40" height="1.40" fill="#5a5a5a" /><rect x="398.50" y="239.40" width="3.40" height="0.80" fill="#707070" /><rect x="338.00" y="238.00" width="9.00" height="0.80" fill="#777" /><rect x="270.00" y="193.70" width="21.20" height="48.80" fill="#fdfdfd" /><rect x="276.00" y="239.60" width="8.00" height="0.70" fill="#aaa" /><rect x="291.20" y="193.70" width="78.80" height="48.80" fill="#8b8b8b" /><rect x="334.80" y="168.30" width="87.50" height="60.00" fill="#ffffff" /><rect x="369.50" y="170.60" width="5.50" height="0.80" fill="#aaa" /><rect x="379.00" y="170.60" width="6.00" height="0.80" fill="#bbb" /><rect x="419.40" y="170.40" width="1.00" height="1.00" fill="#aaa" /><rect x="376.30" y="186.60" width="5.30" height="4.20" fill="#ffffff" stroke="#777" stroke-width="0.4"/><path d="M377.2 190 l1.4 -1.8 l1 1 l0.8 -0.6 l0.8 1.4 z" fill="#888"/><rect x="376.00" y="192.60" width="6.00" height="0.60" fill="#ccc" /><rect x="350.00" y="201.40" width="59.00" height="0.80" fill="#c0c2c6" /><rect x="412.00" y="222.10" width="7.40" height="3.60" fill="#3d4ea8" /><rect x="414.20" y="223.50" width="3.00" height="0.80" fill="#dfe4ff" /><rect x="405.40" y="223.40" width="2.20" height="1.00" fill="#999" /><rect x="270.30" y="138.60" width="97.20" height="55.20" fill="#ffffff" /><rect x="270.30" y="138.60" width="97.20" height="55.20" fill="none" stroke="#d5d5d8" stroke-width="0.4"/><rect x="271.60" y="139.60" width="1.40" height="1.00" fill="#445" /><rect x="274.00" y="139.80" width="5.00" height="0.70" fill="#777" /><rect x="365.00" y="139.60" width="1.20" height="1.00" fill="#888" /><rect x="275.00" y="144.40" width="1.40" height="1.20" fill="#c0c0c4" /><rect x="280.00" y="144.40" width="1.40" height="1.20" fill="#c0c0c4" /><rect x="285.00" y="144.40" width="1.40" height="1.20" fill="#c0c0c4" /><rect x="290.40" y="144.00" width="3.20" height="1.80" fill="#667" /><rect x="295.80" y="144.00" width="3.20" height="1.80" fill="#667" /><rect x="301.20" y="144.00" width="3.20" height="1.80" fill="#667" /><rect x="306.60" y="144.00" width="3.20" height="1.80" fill="#667" /><rect x="287.00" y="144.40" width="1.40" height="1.20" fill="#aaa" /><rect x="342.00" y="144.40" width="2.00" height="1.20" fill="#aab" /><rect x="346.60" y="144.40" width="2.00" height="1.20" fill="#aab" /><rect x="351.20" y="144.40" width="2.00" height="1.20" fill="#aab" /><rect x="355.80" y="144.40" width="2.00" height="1.20" fill="#aab" /><rect x="273.00" y="148.80" width="12.00" height="1.00" fill="#556" /><rect x="355.00" y="148.80" width="2.00" height="1.00" fill="#99a" /><rect x="360.00" y="148.80" width="2.00" height="1.00" fill="#99a" /><rect x="364.40" y="148.40" width="1.60" height="1.60" fill="#556" /><rect x="274.60" y="152.80" width="1.60" height="1.30" fill="#4a8fd0" /><rect x="277.20" y="153.00" width="4.80" height="0.80" fill="#777" /><rect x="274.60" y="156.25" width="1.60" height="1.30" fill="#667" /><rect x="277.20" y="156.45" width="4.80" height="0.80" fill="#777" /><rect x="274.60" y="159.70" width="1.60" height="1.30" fill="#e8b840" /><rect x="277.20" y="159.90" width="4.80" height="0.80" fill="#777" /><rect x="274.60" y="163.15" width="1.60" height="1.30" fill="#e8b840" /><rect x="277.20" y="163.35" width="4.80" height="0.80" fill="#777" /><rect x="274.60" y="166.60" width="1.60" height="1.30" fill="#e8b840" /><rect x="277.20" y="166.80" width="4.80" height="0.80" fill="#777" /><rect x="274.60" y="170.05" width="1.60" height="1.30" fill="#e8b840" /><rect x="277.20" y="170.25" width="4.80" height="0.80" fill="#777" /><rect x="274.60" y="175.10" width="1.60" height="1.30" fill="#99a" /><rect x="277.20" y="175.30" width="4.80" height="0.80" fill="#777" /><rect x="274.60" y="178.55" width="1.60" height="1.30" fill="#99a" /><rect x="277.20" y="178.75" width="4.80" height="0.80" fill="#777" /><rect x="271.40" y="180.40" width="14.00" height="2.60" fill="#dde6f0" /><rect x="274.60" y="181.20" width="6.40" height="0.80" fill="#667" /><rect x="286.80" y="152.00" width="0.30" height="37.00" fill="#e6e6e8" /><rect x="290.00" y="156.60" width="8.40" height="0.60" fill="#4a9a8a" /><rect x="291.00" y="159.00" width="6.00" height="2.40" fill="#f2f4f6" /><rect x="293.40" y="162.80" width="1.60" height="0.80" fill="#aaa" /><rect x="300.60" y="161.60" width="9.40" height="0.60" fill="#c0c4c8" /><rect x="303.60" y="163.20" width="3.40" height="0.60" fill="#bbb" /><rect x="311.20" y="157.90" width="9.70" height="4.00" fill="#6b5c9c" /><rect x="312.60" y="158.90" width="6.90" height="2.00" fill="#e8e6f2" /><rect x="322.50" y="158.00" width="9.10" height="3.90" fill="#3a5a74" /><rect x="323.80" y="158.90" width="6.50" height="2.00" fill="#e4efe4" /><rect x="325.60" y="159.40" width="3.00" height="1.00" fill="#8ab88a" /><rect x="333.40" y="153.20" width="9.20" height="9.20" fill="#2b5cc4" /><rect x="334.80" y="154.60" width="6.40" height="6.40" fill="#3f74da" /><rect x="336.20" y="155.60" width="3.60" height="4.40" fill="#5c8ee6" /><rect x="344.20" y="155.80" width="10.00" height="6.20" fill="#27428e" /><rect x="345.60" y="157.20" width="7.20" height="3.60" fill="#c4d6ee" /><rect x="356.40" y="160.00" width="7.60" height="1.20" fill="#dfe2e6" /><rect x="357.40" y="158.20" width="1.00" height="1.00" fill="#ccd" /><rect x="362.00" y="158.20" width="1.00" height="1.00" fill="#ccd" /><rect x="292.00" y="163.60" width="4.60" height="0.60" fill="#b8bcc0" /><rect x="302.60" y="163.60" width="4.60" height="0.60" fill="#b8bcc0" /><rect x="313.20" y="163.60" width="4.60" height="0.60" fill="#b8bcc0" /><rect x="323.80" y="163.60" width="4.60" height="0.60" fill="#b8bcc0" /><rect x="334.40" y="163.60" width="4.60" height="0.60" fill="#b8bcc0" /><rect x="345.00" y="163.60" width="4.60" height="0.60" fill="#b8bcc0" /><rect x="355.60" y="163.60" width="4.60" height="0.60" fill="#b8bcc0" /><rect x="291.40" y="169.60" width="6.20" height="5.80" fill="#f6f7f8" /><rect x="292.60" y="171.60" width="1.00" height="1.40" fill="#ccd" /><rect x="301.60" y="170.40" width="8.00" height="5.00" fill="#f4f5f6" /><rect x="302.40" y="171.20" width="1.20" height="1.00" fill="#345" /><rect x="302.40" y="173.40" width="1.20" height="1.00" fill="#69c" /><rect x="312.40" y="172.60" width="8.00" height="3.00" fill="#f1f2f4" /><rect x="324.40" y="166.60" width="5.60" height="9.40" fill="#f6f7f8" stroke="#e0e2e6" stroke-width="0.3"/><rect x="325.20" y="168.00" width="1.00" height="1.00" fill="#556" /><rect x="328.00" y="168.00" width="1.00" height="1.00" fill="#69c" /><rect x="325.20" y="170.80" width="1.00" height="1.00" fill="#556" /><rect x="328.00" y="170.80" width="1.00" height="1.00" fill="#69c" /><rect x="325.20" y="173.60" width="1.00" height="1.00" fill="#556" /><rect x="328.00" y="173.60" width="1.00" height="1.00" fill="#69c" /><rect x="334.60" y="166.60" width="6.40" height="9.40" fill="#f6f7f8" stroke="#e0e2e6" stroke-width="0.3"/><rect x="335.40" y="168.00" width="1.00" height="1.00" fill="#556" /><rect x="338.80" y="168.00" width="1.00" height="1.00" fill="#69c" /><rect x="335.40" y="170.80" width="1.00" height="1.00" fill="#556" /><rect x="338.80" y="170.80" width="1.00" height="1.00" fill="#69c" /><rect x="335.40" y="173.60" width="1.00" height="1.00" fill="#556" /><rect x="338.80" y="173.60" width="1.00" height="1.00" fill="#69c" /><rect x="347.60" y="170.40" width="5.00" height="5.00" fill="#b7d9ec" /><rect x="348.60" y="171.40" width="3.00" height="3.00" fill="#d8ecf6" /><rect x="355.60" y="169.60" width="9.00" height="0.80" fill="#788088" /><rect x="355.60" y="171.00" width="9.00" height="4.60" fill="#fafafa" /><rect x="292.00" y="177.40" width="4.20" height="0.60" fill="#9a9ea4" /><rect x="302.60" y="177.40" width="4.20" height="0.60" fill="#9a9ea4" /><rect x="313.20" y="177.40" width="4.20" height="0.60" fill="#9a9ea4" /><rect x="323.80" y="177.40" width="4.20" height="0.60" fill="#9a9ea4" /><rect x="334.40" y="177.40" width="4.20" height="0.60" fill="#9a9ea4" /><rect x="345.00" y="177.40" width="4.20" height="0.60" fill="#9a9ea4" /><rect x="355.60" y="177.40" width="4.20" height="0.60" fill="#555" /><rect x="290.40" y="182.20" width="8.60" height="0.60" fill="#9ab8c8" /><rect x="301.00" y="182.20" width="8.60" height="0.60" fill="#9ab8c8" /><rect x="311.60" y="182.20" width="8.60" height="0.60" fill="#7a9aa8" /><rect x="322.20" y="182.20" width="8.60" height="0.60" fill="#7a9aa8" /><rect x="332.80" y="182.20" width="8.60" height="0.60" fill="#7a9aa8" /><rect x="343.40" y="182.20" width="8.60" height="0.60" fill="#7a9aa8" /><rect x="354.00" y="182.20" width="8.60" height="0.60" fill="#7a9aa8" /><rect x="291.00" y="183.60" width="8.00" height="0.60" fill="#c8ccd0" /><rect x="302.00" y="183.60" width="8.00" height="0.60" fill="#c8ccd0" /><rect x="286.00" y="188.00" width="8.00" height="0.80" fill="#667" /><rect x="296.00" y="187.40" width="47.50" height="2.20" fill="#ffffff" stroke="#aab" stroke-width="0.3"/><rect x="345.50" y="187.40" width="13.00" height="2.20" fill="#f4f4f6" stroke="#ccd" stroke-width="0.3"/><rect x="346.00" y="190.60" width="10.00" height="2.40" fill="#f6f6f8" stroke="#6a8ac8" stroke-width="0.35"/><rect x="349.50" y="191.50" width="3.00" height="0.70" fill="#556" /><rect x="358.00" y="190.60" width="8.00" height="2.40" fill="#f6f6f8" stroke="#ccd" stroke-width="0.3"/><rect x="360.40" y="191.50" width="3.00" height="0.70" fill="#556" /><rect x="291.40" y="190.00" width="52.10" height="17.30" fill="#ffffff" stroke="#6c6c70" stroke-width="0.45"/><rect x="292.60" y="191.00" width="7.50" height="0.80" fill="#333" /><rect x="292.60" y="192.75" width="9.50" height="0.80" fill="#333" /><rect x="292.60" y="194.50" width="9.00" height="0.80" fill="#333" /><rect x="292.60" y="196.25" width="8.60" height="0.80" fill="#333" /><rect x="292.60" y="198.00" width="8.00" height="0.80" fill="#333" /><rect x="292.60" y="199.75" width="9.80" height="0.80" fill="#556" /><rect x="292.60" y="201.50" width="7.00" height="0.80" fill="#556" /><rect x="292.60" y="203.25" width="6.40" height="0.80" fill="#556" /><rect x="270.0" y="242.5" width="197.3" height="5.00" fill="url(#t5task)"/><rect x="272.40" y="243.80" width="1.60" height="2.20" fill="#6a7a8a" /><rect x="336.40" y="243.60" width="1.80" height="2.40" fill="#5a8a7a" /><rect x="341.00" y="244.40" width="5.00" height="0.80" fill="#99a" /><rect x="357.00" y="243.80" width="3.00" height="2.00" fill="#889" /><rect x="362.60" y="243.80" width="2.00" height="2.20" fill="#333" /><rect x="367.00" y="243.60" width="2.40" height="2.40" fill="#3a4a8a" /><rect x="373.00" y="243.70" width="2.00" height="2.30" fill="#5a8" /><rect x="377.40" y="243.70" width="2.00" height="2.30" fill="#38a" /><rect x="381.80" y="243.70" width="2.00" height="2.30" fill="#235" /><rect x="386.20" y="243.70" width="2.00" height="2.30" fill="#c84" /><rect x="390.60" y="243.70" width="2.00" height="2.30" fill="#334" /><rect x="395.00" y="243.70" width="2.00" height="2.30" fill="#778" /><rect x="399.40" y="243.70" width="2.00" height="2.30" fill="#99a" /><rect x="403.80" y="243.70" width="2.00" height="2.30" fill="#889" /><rect x="445.00" y="244.20" width="1.20" height="1.30" fill="#8c9098" /><rect x="447.60" y="244.20" width="1.20" height="1.30" fill="#8c9098" /><rect x="450.20" y="244.20" width="1.20" height="1.30" fill="#8c9098" /><rect x="452.80" y="244.20" width="1.20" height="1.30" fill="#8c9098" /><rect x="455.40" y="244.20" width="1.20" height="1.30" fill="#8c9098" /><rect x="458.00" y="244.20" width="1.20" height="1.30" fill="#8c9098" /><rect x="460.60" y="244.20" width="1.20" height="1.30" fill="#8c9098" /><rect x="459.50" y="243.60" width="7.00" height="2.40" fill="#dcdcc0" /></svg>
<svg class="thumb" style="left:516.0px;top:137.2px" width="197.3" height="110.3" viewBox="516.0 137.2 197.3 110.3"><defs><linearGradient id="t6prev" x1="0" x2="1" y1="0" y2="1"><stop offset="0" stop-color="#06232a"/><stop offset="0.4" stop-color="#0a3c3f"/><stop offset="0.7" stop-color="#082c32"/><stop offset="1" stop-color="#051a20"/></linearGradient>
<linearGradient id="t6purp" x1="0" x2="0" y1="0" y2="1"><stop offset="0" stop-color="#4c1a62"/><stop offset="0.45" stop-color="#33184c"/><stop offset="0.8" stop-color="#12303c" stop-opacity="0.9"/><stop offset="1" stop-color="#0a2a32" stop-opacity="0.2"/></linearGradient>
<linearGradient id="t6task" x1="0" x2="1" y1="0" y2="0"><stop offset="0" stop-color="#e8f2ec"/><stop offset="0.3" stop-color="#e4f0f2"/><stop offset="0.7" stop-color="#e8eef2"/><stop offset="1" stop-color="#eaf2e2"/></linearGradient></defs><rect x="516.00" y="137.20" width="197.30" height="110.30" fill="#19191b" /><rect x="516.00" y="137.20" width="197.30" height="3.00" fill="#101012" /><rect x="518.00" y="138.40" width="4.00" height="0.90" fill="#888" /><rect x="524.50" y="138.40" width="4.50" height="0.90" fill="#888" /><rect x="532.00" y="138.40" width="1.40" height="0.90" fill="#888" /><rect x="604.00" y="138.30" width="20.00" height="1.00" fill="#555" /><rect x="695.3" y="137.9" width="5.4" height="1.9" rx="0.9" fill="#3fb5b0"/><rect x="680.00" y="138.30" width="4.00" height="0.90" fill="#888" /><rect x="688.00" y="138.30" width="4.00" height="0.90" fill="#888" /><rect x="704.00" y="138.40" width="1.20" height="0.80" fill="#777" /><rect x="707.00" y="138.40" width="1.20" height="0.80" fill="#777" /><rect x="710.00" y="138.40" width="1.20" height="0.80" fill="#777" /><rect x="516.00" y="140.20" width="53.30" height="63.60" fill="#222224" /><rect x="516.00" y="140.20" width="53.30" height="7.20" fill="#1c1c1e" /><rect x="519.00" y="141.60" width="1.80" height="1.80" fill="#85878c" /><rect x="518.60" y="144.60" width="2.60" height="0.70" fill="#5c5e62" /><rect x="524.40" y="141.60" width="1.80" height="1.80" fill="#85878c" /><rect x="524.00" y="144.60" width="2.60" height="0.70" fill="#5c5e62" /><rect x="529.80" y="141.60" width="1.80" height="1.80" fill="#85878c" /><rect x="529.40" y="144.60" width="2.60" height="0.70" fill="#5c5e62" /><rect x="535.20" y="141.60" width="1.80" height="1.80" fill="#85878c" /><rect x="534.80" y="144.60" width="2.60" height="0.70" fill="#5c5e62" /><rect x="540.60" y="141.60" width="1.80" height="1.80" fill="#85878c" /><rect x="540.20" y="144.60" width="2.60" height="0.70" fill="#5c5e62" /><rect x="546.00" y="141.60" width="1.80" height="1.80" fill="#85878c" /><rect x="545.60" y="144.60" width="2.60" height="0.70" fill="#5c5e62" /><rect x="551.40" y="141.60" width="1.80" height="1.80" fill="#85878c" /><rect x="551.00" y="144.60" width="2.60" height="0.70" fill="#5c5e62" /><rect x="556.80" y="141.60" width="1.80" height="1.80" fill="#85878c" /><rect x="556.40" y="144.60" width="2.60" height="0.70" fill="#5c5e62" /><rect x="562.20" y="141.60" width="1.80" height="1.80" fill="#85878c" /><rect x="561.80" y="144.60" width="2.60" height="0.70" fill="#5c5e62" /><rect x="516.00" y="147.40" width="11.00" height="56.40" fill="#1c1c1e" /><rect x="518.40" y="148.60" width="7.00" height="1.80" fill="#2a3a3a" /><rect x="520.00" y="149.20" width="4.00" height="0.70" fill="#3fb5b0" /><rect x="528.00" y="148.60" width="25.00" height="1.80" fill="#2c2c2f" /><rect x="529.50" y="149.20" width="4.50" height="0.70" fill="#777" /><rect x="556.00" y="148.80" width="4.00" height="1.40" fill="#88898c" /><rect x="563.00" y="148.80" width="4.00" height="1.40" fill="#88898c" /><rect x="528.00" y="153.80" width="9.40" height="6.60" fill="#2f86b4" opacity="0.85"/><rect x="529.00" y="156.77" width="7.40" height="1.65" fill="#ffffff" opacity="0.15"/><rect x="538.80" y="153.80" width="9.40" height="6.60" fill="#2494e4" opacity="0.85"/><rect x="539.80" y="156.77" width="7.40" height="1.65" fill="#ffffff" opacity="0.15"/><rect x="528.00" y="164.00" width="9.40" height="6.80" fill="#5ea4e4" opacity="0.85"/><rect x="529.00" y="167.06" width="7.40" height="1.70" fill="#ffffff" opacity="0.15"/><rect x="538.80" y="164.00" width="9.40" height="6.80" fill="#3a4038" opacity="0.85"/><rect x="539.80" y="167.06" width="7.40" height="1.70" fill="#ffffff" opacity="0.15"/><rect x="549.60" y="164.00" width="9.00" height="6.80" fill="#3b32a4" opacity="0.85"/><rect x="550.60" y="167.06" width="7.00" height="1.70" fill="#ffffff" opacity="0.15"/><rect x="528.00" y="174.80" width="9.40" height="6.00" fill="#1c52b4" opacity="0.85"/><rect x="529.00" y="177.50" width="7.40" height="1.50" fill="#ffffff" opacity="0.15"/><rect x="538.80" y="174.80" width="9.40" height="6.00" fill="#214a5a" opacity="0.85"/><rect x="539.80" y="177.50" width="7.40" height="1.50" fill="#ffffff" opacity="0.15"/><rect x="549.60" y="174.80" width="9.00" height="6.00" fill="#1c4048" opacity="0.85"/><rect x="550.60" y="177.50" width="7.00" height="1.50" fill="#ffffff" opacity="0.15"/><rect x="528.00" y="185.00" width="9.40" height="5.80" fill="#7a4322" opacity="0.85"/><rect x="529.00" y="187.61" width="7.40" height="1.45" fill="#ffffff" opacity="0.15"/><rect x="538.80" y="185.00" width="9.40" height="5.80" fill="#9c8f42" opacity="0.85"/><rect x="539.80" y="187.61" width="7.40" height="1.45" fill="#ffffff" opacity="0.15"/><rect x="549.60" y="185.00" width="9.00" height="5.80" fill="#526a72" opacity="0.85"/><rect x="550.60" y="187.61" width="7.00" height="1.45" fill="#ffffff" opacity="0.15"/><rect x="551.00" y="153.00" width="5.20" height="9.40" fill="#857c74" /><rect x="528.00" y="195.60" width="9.40" height="4.40" fill="#a6d4f2" /><rect x="529.00" y="197.00" width="7.40" height="1.60" fill="#d8eefc" /><rect x="549.00" y="194.90" width="9.40" height="5.50" fill="#f0a244" /><rect x="550.40" y="196.40" width="6.60" height="2.40" fill="#f6bc74" /><rect x="528.40" y="161.50" width="5.60" height="0.60" fill="#5a5c60" /><rect x="539.20" y="161.50" width="5.60" height="0.60" fill="#5a5c60" /><rect x="550.00" y="161.50" width="5.60" height="0.60" fill="#5a5c60" /><rect x="528.40" y="171.90" width="5.60" height="0.60" fill="#5a5c60" /><rect x="539.20" y="171.90" width="5.60" height="0.60" fill="#5a5c60" /><rect x="550.00" y="171.90" width="5.60" height="0.60" fill="#5a5c60" /><rect x="528.40" y="181.90" width="5.60" height="0.60" fill="#5a5c60" /><rect x="539.20" y="181.90" width="5.60" height="0.60" fill="#5a5c60" /><rect x="550.00" y="181.90" width="5.60" height="0.60" fill="#5a5c60" /><rect x="528.40" y="191.90" width="5.60" height="0.60" fill="#5a5c60" /><rect x="539.20" y="191.90" width="5.60" height="0.60" fill="#5a5c60" /><rect x="550.00" y="191.90" width="5.60" height="0.60" fill="#5a5c60" /><rect x="569.30" y="140.20" width="1.30" height="63.60" fill="#0e0e10" /><rect x="570.60" y="140.20" width="106.40" height="63.60" fill="#1b1b1d" /><rect x="572.00" y="141.60" width="4.00" height="0.90" fill="#888" /><rect x="578" y="144.4" width="91.4" height="52.6" rx="4" fill="url(#t6prev)"/><rect x="650" y="144.4" width="19.4" height="52.6" fill="url(#t6purp)"/><rect x="578.6" y="145" width="90.2" height="51.4" rx="3.6" fill="none" stroke="#69c6cc" stroke-width="0.7"/><rect x="577.4" y="143.8" width="92.6" height="53.8" rx="4.4" fill="none" stroke="#2a7a80" stroke-width="0.5"/><rect x="578.00" y="170.40" width="91.40" height="0.50" fill="#2a8a88" opacity="0.7"/><rect x="576.60" y="164.00" width="3.00" height="13.00" fill="#111315" /><rect x="668.00" y="164.00" width="3.00" height="13.00" fill="#111315" /><rect x="668.20" y="148.00" width="2.40" height="15.00" fill="#7cc8d0" /><rect x="668.20" y="178.00" width="2.40" height="16.00" fill="#7cc8d0" /><rect x="577.20" y="148.00" width="1.40" height="15.00" fill="#8ad0d6" /><rect x="577.20" y="178.00" width="1.40" height="16.00" fill="#8ad0d6" /><path d="M576.8 170.6 l1.6 -1.6 l1.6 1.6 l-1.6 1.6 z" fill="none" stroke="#d8f0f0" stroke-width="0.35"/><path d="M666.6 170.6 l1.6 -1.6 l1.6 1.6 l-1.6 1.6 z" fill="none" stroke="#d8f0f0" stroke-width="0.35"/><rect x="622.40" y="145.20" width="26.20" height="51.20" fill="#f6f8fa" /><rect x="623.00" y="145.80" width="25.00" height="8.80" fill="#1c2c54" /><rect x="638.00" y="147.00" width="7.60" height="5.40" fill="#3a5a9a" /><rect x="639.40" y="148.00" width="5.00" height="3.40" fill="#b8d0f0" /><rect x="624.60" y="151.40" width="9.40" height="1.00" fill="#dfe6f4" /><rect x="623.60" y="156.00" width="4.40" height="0.80" fill="#556" /><rect x="624.00" y="158.00" width="10.60" height="4.60" fill="#e6f1f7" /><rect x="624.80" y="158.80" width="6.80" height="0.80" fill="#5a9ab4" /><rect x="624.80" y="160.60" width="8.30" height="0.60" fill="#b4c8d4" /><rect x="624.00" y="165.40" width="10.60" height="4.20" fill="#f0f2f5" /><rect x="624.80" y="166.20" width="5.80" height="0.80" fill="#99a" /><rect x="636.40" y="158.00" width="10.60" height="4.60" fill="#e6f1f7" /><rect x="637.20" y="158.80" width="6.80" height="0.80" fill="#5a9ab4" /><rect x="637.20" y="160.60" width="8.30" height="0.60" fill="#b4c8d4" /><rect x="636.40" y="165.40" width="10.60" height="4.20" fill="#f0f2f5" /><rect x="637.20" y="166.20" width="5.80" height="0.80" fill="#99a" /><rect x="623.60" y="172.40" width="5.40" height="0.80" fill="#556" /><circle cx="626" cy="176.8" r="1.1" fill="#4a9a9a"/><rect x="628.00" y="176.40" width="4.00" height="0.80" fill="#99a" /><circle cx="638.6" cy="176.8" r="1.1" fill="#4a9a9a"/><rect x="640.60" y="176.40" width="4.00" height="0.80" fill="#99a" /><circle cx="638.6" cy="181.6" r="1.1" fill="#4a9a9a"/><rect x="640.60" y="181.20" width="4.00" height="0.80" fill="#99a" /><rect x="625.00" y="180.20" width="7.00" height="0.60" fill="#ccd" /><rect x="627.00" y="192.60" width="1.20" height="1.40" fill="#c4c8d0" /><rect x="634.40" y="192.60" width="1.20" height="1.40" fill="#c4c8d0" /><rect x="641.80" y="192.60" width="1.20" height="1.40" fill="#c4c8d0" /><rect x="572.00" y="200.40" width="16.00" height="0.80" fill="#555" /><rect x="621.60" y="200.20" width="1.00" height="1.20" fill="#888" /><rect x="669.00" y="200.40" width="2.00" height="1.00" fill="#777" /><rect x="673.00" y="200.40" width="2.00" height="1.00" fill="#777" /><rect x="677.00" y="140.20" width="1.00" height="63.60" fill="#0e0e10" /><rect x="678.00" y="140.20" width="35.30" height="63.60" fill="#1e1e20" /><rect x="680.60" y="143.20" width="2.80" height="1.10" fill="#a0a2a6" /><rect x="685.90" y="143.20" width="2.80" height="1.10" fill="#6e7074" /><rect x="691.20" y="143.20" width="2.80" height="1.10" fill="#6e7074" /><rect x="696.50" y="143.20" width="2.80" height="1.10" fill="#6e7074" /><rect x="701.80" y="143.20" width="2.80" height="1.10" fill="#6e7074" /><rect x="707.10" y="143.20" width="2.80" height="1.10" fill="#6e7074" /><rect x="680.60" y="147.40" width="6.00" height="2.40" fill="#3a3a3e" /><rect x="682.00" y="148.20" width="3.40" height="0.80" fill="#bbb" /><rect x="690.00" y="148.20" width="3.00" height="0.80" fill="#666" /><rect x="697.00" y="148.20" width="3.00" height="0.80" fill="#666" /><rect x="704.00" y="148.20" width="3.00" height="0.80" fill="#666" /><rect x="680.60" y="154.20" width="4.40" height="1.00" fill="#c8c8c8" /><rect x="708.00" y="154.40" width="1.00" height="0.80" fill="#666" /><rect x="680.60" y="158.40" width="2.40" height="1.00" fill="#888" /><rect x="686.00" y="158.60" width="2.40" height="0.50" fill="#999" /><rect x="688.00" y="158.00" width="0.80" height="1.80" fill="#ddd" /><rect x="700.00" y="158.20" width="8.00" height="1.40" fill="#2c2c30" /><rect x="680.60" y="162.60" width="4.00" height="1.00" fill="#c8c8c8" /><rect x="707" y="160.8" width="4.3" height="1.8" rx="0.9" fill="#3fb88a"/><rect x="680.60" y="166.40" width="2.40" height="1.00" fill="#888" /><rect x="686.00" y="166.00" width="9.00" height="1.80" fill="#2c2c30" /><rect x="698.00" y="166.00" width="9.00" height="1.80" fill="#2c2c30" /><rect x="680.60" y="170.40" width="2.40" height="1.00" fill="#888" /><rect x="686.00" y="170.00" width="9.00" height="1.80" fill="#2c2c30" /><rect x="698.00" y="170.00" width="9.00" height="1.80" fill="#2c2c30" /><rect x="681.00" y="174.40" width="1.60" height="1.40" fill="#6c6e72" /><rect x="684.30" y="174.40" width="1.60" height="1.40" fill="#6c6e72" /><rect x="687.60" y="174.40" width="1.60" height="1.40" fill="#6c6e72" /><rect x="690.90" y="174.40" width="1.60" height="1.40" fill="#6c6e72" /><rect x="694.20" y="174.40" width="1.60" height="1.40" fill="#6c6e72" /><rect x="697.50" y="174.40" width="1.60" height="1.40" fill="#6c6e72" /><rect x="700.80" y="174.40" width="1.60" height="1.40" fill="#6c6e72" /><rect x="704.10" y="174.40" width="1.60" height="1.40" fill="#6c6e72" /><rect x="707.40" y="174.40" width="1.60" height="1.40" fill="#6c6e72" /><rect x="680.60" y="179.80" width="4.00" height="1.00" fill="#c8c8c8" /><rect x="704.00" y="180.00" width="1.00" height="0.80" fill="#666" /><rect x="708.00" y="180.00" width="1.00" height="0.80" fill="#666" /><rect x="680.00" y="185.60" width="0.80" height="0.80" fill="#888" /><rect x="682.00" y="185.60" width="6.00" height="0.90" fill="#b4b4b4" /><rect x="680.00" y="191.20" width="0.80" height="0.80" fill="#888" /><rect x="682.00" y="191.20" width="5.00" height="0.90" fill="#b4b4b4" /><rect x="680.00" y="196.80" width="0.80" height="0.80" fill="#888" /><rect x="682.00" y="196.80" width="4.00" height="0.90" fill="#b4b4b4" /><rect x="516.00" y="203.80" width="197.30" height="5.40" fill="#262628" /><rect x="516.00" y="203.80" width="197.30" height="0.40" fill="#0e0e10" /><rect x="518.00" y="206.00" width="2.00" height="1.20" fill="#999" /><rect x="531.00" y="206.00" width="1.60" height="1.40" fill="#7c7e82" /><rect x="534.90" y="206.00" width="1.60" height="1.40" fill="#7c7e82" /><rect x="538.80" y="206.00" width="1.60" height="1.40" fill="#7c7e82" /><rect x="542.70" y="206.00" width="1.60" height="1.40" fill="#7c7e82" /><rect x="546.60" y="206.00" width="1.60" height="1.40" fill="#7c7e82" /><rect x="550.50" y="206.00" width="1.60" height="1.40" fill="#7c7e82" /><rect x="554.40" y="206.00" width="1.60" height="1.40" fill="#7c7e82" /><rect x="558.30" y="206.00" width="1.60" height="1.40" fill="#7c7e82" /><rect x="562.20" y="206.00" width="1.60" height="1.40" fill="#7c7e82" /><rect x="566.10" y="206.00" width="1.60" height="1.40" fill="#7c7e82" /><rect x="570.00" y="206.00" width="1.60" height="1.40" fill="#7c7e82" /><rect x="573.90" y="206.00" width="1.60" height="1.40" fill="#7c7e82" /><rect x="577.80" y="206.00" width="1.60" height="1.40" fill="#7c7e82" /><rect x="672.00" y="206.00" width="1.40" height="1.40" fill="#7c7e82" /><rect x="675.80" y="206.00" width="1.40" height="1.40" fill="#7c7e82" /><rect x="679.60" y="206.00" width="1.40" height="1.40" fill="#7c7e82" /><rect x="683.40" y="206.00" width="1.40" height="1.40" fill="#7c7e82" /><rect x="687.20" y="206.00" width="1.40" height="1.40" fill="#7c7e82" /><rect x="691.00" y="206.00" width="1.40" height="1.40" fill="#7c7e82" /><rect x="694.80" y="206.00" width="1.40" height="1.40" fill="#7c7e82" /><rect x="698.60" y="206.00" width="1.40" height="1.40" fill="#ddd" /><rect x="702.40" y="206.00" width="1.40" height="1.40" fill="#7c7e82" /><rect x="706.20" y="206.00" width="1.40" height="1.40" fill="#7c7e82" /><rect x="516.00" y="209.20" width="197.30" height="33.20" fill="#1b1b1d" /><rect x="537.00" y="210.20" width="3.00" height="0.50" fill="#4a4a4e" /><rect x="563.00" y="210.20" width="3.00" height="0.50" fill="#4a4a4e" /><rect x="589.00" y="210.20" width="3.00" height="0.50" fill="#4a4a4e" /><rect x="615.00" y="210.20" width="3.00" height="0.50" fill="#4a4a4e" /><rect x="641.00" y="210.20" width="3.00" height="0.50" fill="#4a4a4e" /><rect x="667.00" y="210.20" width="3.00" height="0.50" fill="#4a4a4e" /><rect x="693.00" y="210.20" width="3.00" height="0.50" fill="#4a4a4e" /><rect x="519.40" y="213.20" width="1.40" height="1.20" fill="#8a8c90" /><rect x="522.00" y="213.20" width="1.40" height="1.20" fill="#8a8c90" /><rect x="524.60" y="213.20" width="1.40" height="1.20" fill="#8a8c90" /><rect x="519.40" y="218.00" width="1.40" height="1.20" fill="#8a8c90" /><rect x="522.00" y="218.00" width="1.40" height="1.20" fill="#8a8c90" /><rect x="524.60" y="218.00" width="1.40" height="1.20" fill="#8a8c90" /><rect x="519.40" y="222.80" width="1.40" height="1.20" fill="#8a8c90" /><rect x="522.00" y="222.80" width="1.40" height="1.20" fill="#8a8c90" /><rect x="519.40" y="227.80" width="1.40" height="1.20" fill="#8a8c90" /><rect x="522.00" y="227.80" width="1.40" height="1.20" fill="#8a8c90" /><rect x="524.60" y="227.80" width="1.40" height="1.20" fill="#8a8c90" /><rect x="519.40" y="235.00" width="1.40" height="1.20" fill="#8a8c90" /><rect x="522.00" y="235.00" width="1.40" height="1.20" fill="#8a8c90" /><rect x="524.60" y="235.00" width="1.40" height="1.20" fill="#8a8c90" /><rect x="519.40" y="240.40" width="1.40" height="1.20" fill="#8a8c90" /><rect x="522.00" y="240.40" width="1.40" height="1.20" fill="#8a8c90" /><rect x="524.60" y="240.40" width="1.40" height="1.20" fill="#8a8c90" /><rect x="527.00" y="216.20" width="186.30" height="0.25" fill="#29292c" /><rect x="527.00" y="221.20" width="186.30" height="0.25" fill="#29292c" /><rect x="527.00" y="224.60" width="186.30" height="0.25" fill="#29292c" /><rect x="527.00" y="231.80" width="186.30" height="0.25" fill="#29292c" /><rect x="527.00" y="238.80" width="186.30" height="0.25" fill="#29292c" /><rect x="534.00" y="212.20" width="5.20" height="2.80" fill="#e8943a" /><rect x="534.80" y="213.10" width="3.60" height="0.90" fill="#fbd6a4" /><rect x="576.00" y="212.20" width="5.90" height="2.80" fill="#e8943a" /><rect x="576.80" y="213.10" width="4.30" height="0.90" fill="#fbd6a4" /><rect x="615.60" y="212.20" width="5.20" height="2.80" fill="#e8943a" /><rect x="616.40" y="213.10" width="3.60" height="0.90" fill="#fbd6a4" /><rect x="529.10" y="225.00" width="4.90" height="6.20" fill="#2a6a70" /><rect x="529.45" y="225.70" width="4.20" height="4.80" fill="#dff0f0" /><rect x="529.10" y="225.00" width="4.90" height="0.70" fill="#1f5a60" /><rect x="539.20" y="225.00" width="36.60" height="6.20" fill="#2a6a70" /><rect x="539.55" y="225.70" width="3.88" height="4.80" fill="#dff0f0" /><rect x="544.13" y="225.70" width="3.87" height="4.80" fill="#dff0f0" /><rect x="548.70" y="225.70" width="3.87" height="4.80" fill="#dff0f0" /><rect x="553.27" y="225.70" width="3.88" height="4.80" fill="#dff0f0" /><rect x="557.85" y="225.70" width="3.88" height="4.80" fill="#dff0f0" /><rect x="562.43" y="225.70" width="3.87" height="4.80" fill="#dff0f0" /><rect x="567.00" y="225.70" width="3.87" height="4.80" fill="#dff0f0" /><rect x="571.57" y="225.70" width="3.88" height="4.80" fill="#dff0f0" /><rect x="539.20" y="225.00" width="36.60" height="0.70" fill="#1f5a60" /><rect x="581.90" y="225.00" width="33.00" height="6.20" fill="#2a6a70" /><rect x="582.25" y="225.70" width="4.01" height="4.80" fill="#dff0f0" /><rect x="586.96" y="225.70" width="4.01" height="4.80" fill="#dff0f0" /><rect x="591.68" y="225.70" width="4.01" height="4.80" fill="#dff0f0" /><rect x="596.39" y="225.70" width="4.01" height="4.80" fill="#dff0f0" /><rect x="601.11" y="225.70" width="4.01" height="4.80" fill="#dff0f0" /><rect x="605.82" y="225.70" width="4.01" height="4.80" fill="#dff0f0" /><rect x="610.54" y="225.70" width="4.01" height="4.80" fill="#dff0f0" /><rect x="581.90" y="225.00" width="33.00" height="0.70" fill="#1f5a60" /><rect x="529.00" y="232.90" width="74.00" height="5.30" fill="#0d3552" /><rect x="614.60" y="232.90" width="5.40" height="5.30" fill="#0d3552" /><rect x="529.40" y="234.00" width="3.80" height="0.80" fill="#4aa8d8" /><rect x="529.40" y="236.20" width="3.80" height="0.80" fill="#2a7aa8" /><rect x="534.40" y="234.00" width="3.00" height="0.80" fill="#4aa8d8" /><rect x="534.40" y="236.20" width="3.00" height="0.80" fill="#2a7aa8" /><rect x="539.00" y="234.00" width="9.00" height="0.80" fill="#4aa8d8" /><rect x="539.00" y="236.20" width="9.00" height="0.80" fill="#2a7aa8" /><rect x="552.00" y="234.00" width="8.00" height="0.80" fill="#4aa8d8" /><rect x="552.00" y="236.20" width="8.00" height="0.80" fill="#2a7aa8" /><rect x="563.00" y="234.00" width="10.00" height="0.80" fill="#4aa8d8" /><rect x="563.00" y="236.20" width="10.00" height="0.80" fill="#2a7aa8" /><rect x="576.00" y="234.00" width="12.00" height="0.80" fill="#4aa8d8" /><rect x="576.00" y="236.20" width="12.00" height="0.80" fill="#2a7aa8" /><rect x="589.60" y="234.00" width="12.40" height="0.80" fill="#4aa8d8" /><rect x="589.60" y="236.20" width="12.40" height="0.80" fill="#2a7aa8" /><rect x="615.00" y="234.00" width="4.40" height="0.80" fill="#4aa8d8" /><rect x="615.00" y="236.20" width="4.40" height="0.80" fill="#2a7aa8" /><rect x="621.00" y="215.20" width="47.60" height="6.60" fill="#1f6c6c" /><rect x="621.80" y="217.00" width="46.00" height="2.90" fill="#e2f2f2" /><rect x="622.00" y="215.70" width="14.00" height="0.70" fill="#6ab4b4" /><rect x="621.00" y="222.10" width="8.80" height="2.20" fill="#dc9a3c" /><rect x="612.00" y="225.00" width="2.60" height="6.20" fill="#dff0f0" /><rect x="622.10" y="209.20" width="0.40" height="33.20" fill="#d8a878" /><path d="M621.2 209.2 h2.2 v1.2 l-1.1 1 l-1.1 -1 z" fill="#f0f0f0"/><rect x="615.00" y="235.00" width="4.00" height="5.00" fill="#16506c" /><rect x="516.0" y="242.4" width="197.3" height="5.10" fill="url(#t6task)"/><rect x="518.00" y="243.40" width="8.00" height="0.80" fill="#556" /><rect x="518.00" y="245.20" width="9.00" height="0.70" fill="#99a" /><rect x="576.00" y="243.60" width="2.00" height="2.40" fill="#3a5a7a" /><rect x="581.00" y="244.40" width="5.00" height="0.80" fill="#99a" /><rect x="596.00" y="243.80" width="4.00" height="2.00" fill="#99a" /><rect x="602.00" y="243.80" width="2.00" height="2.20" fill="#333" /><rect x="606.60" y="243.60" width="2.40" height="2.40" fill="#345" /><rect x="611.00" y="243.60" width="2.60" height="2.40" fill="#456" /><rect x="612.00" y="243.60" width="2.00" height="2.40" fill="#456" /><rect x="616.50" y="243.60" width="2.00" height="2.40" fill="#235" /><rect x="621.00" y="243.60" width="2.00" height="2.40" fill="#99a" /><rect x="625.50" y="243.60" width="2.00" height="2.40" fill="#345" /><rect x="630.00" y="243.60" width="2.00" height="2.40" fill="#222" /><rect x="634.50" y="243.60" width="2.00" height="2.40" fill="#5a9" /><rect x="639.00" y="243.60" width="2.00" height="2.40" fill="#89a" /><rect x="643.50" y="243.60" width="2.00" height="2.40" fill="#234" /><rect x="648.00" y="243.60" width="2.00" height="2.40" fill="#8a9" /><rect x="652.50" y="243.60" width="2.00" height="2.40" fill="#99a" /><rect x="690.00" y="244.20" width="1.20" height="1.30" fill="#9aa89a" /><rect x="692.60" y="244.20" width="1.20" height="1.30" fill="#9aa89a" /><rect x="695.20" y="244.20" width="1.20" height="1.30" fill="#9aa89a" /><rect x="697.80" y="244.20" width="1.20" height="1.30" fill="#9aa89a" /><rect x="700.40" y="244.20" width="1.20" height="1.30" fill="#9aa89a" /><rect x="703.00" y="244.20" width="1.20" height="1.30" fill="#9aa89a" /><rect x="705.60" y="244.20" width="1.20" height="1.30" fill="#9aa89a" /><rect x="708.20" y="244.20" width="1.20" height="1.30" fill="#9aa89a" /><rect x="706.00" y="243.60" width="6.60" height="2.40" fill="#d4dcc8" /></svg>
<svg class="thumb" style="left:24.4px;top:261.2px" width="197.3" height="110.3" viewBox="24.4 261.2 197.3 110.3"><defs><linearGradient id="t7task" x1="0" x2="1" y1="0" y2="0"><stop offset="0" stop-color="#f8f8f8"/><stop offset="0.35" stop-color="#f6f4f2"/><stop offset="0.55" stop-color="#f6ece4"/><stop offset="0.8" stop-color="#f6e6de"/><stop offset="1" stop-color="#f6eee8"/></linearGradient></defs><rect x="24.40" y="261.20" width="197.30" height="110.30" fill="#f4f4f4" /><rect x="24.40" y="261.20" width="197.30" height="3.40" fill="#ffffff" /><rect x="25.40" y="262.90" width="1.20" height="0.90" fill="#667" /><rect x="27.40" y="263.00" width="4.60" height="0.70" fill="#888" /><rect x="33.00" y="263.00" width="3.00" height="0.70" fill="#aaa" /><rect x="37.00" y="263.00" width="3.60" height="0.70" fill="#bbb" /><rect x="213.00" y="263.00" width="1.00" height="0.70" fill="#aaa" /><rect x="215.60" y="263.00" width="1.00" height="0.70" fill="#aaa" /><rect x="218.20" y="263.00" width="1.00" height="0.70" fill="#aaa" /><rect x="24.40" y="294.20" width="197.30" height="3.70" fill="#ffffff" /><rect x="24.40" y="327.90" width="197.30" height="2.70" fill="#ffffff" /><rect x="24.40" y="361.60" width="197.30" height="2.80" fill="#ffffff" /><rect x="89.67" y="264.60" width="1.00" height="102.80" fill="#fafafa" /><rect x="155.43" y="264.60" width="1.00" height="102.80" fill="#fafafa" /><rect x="52.28" y="279.20" width="3.60" height="0.80" fill="#d2d2d5" /><rect x="56.88" y="279.20" width="5.00" height="0.80" fill="#b2b2b6" /><rect x="52.68" y="295.70" width="9.20" height="0.70" fill="#a4a4aa" /><rect x="118.05" y="279.20" width="3.60" height="0.80" fill="#d2d2d5" /><rect x="122.65" y="279.20" width="5.00" height="0.80" fill="#b2b2b6" /><rect x="118.45" y="295.70" width="9.20" height="0.70" fill="#a4a4aa" /><rect x="183.82" y="279.20" width="3.60" height="0.80" fill="#d2d2d5" /><rect x="188.42" y="279.20" width="5.00" height="0.80" fill="#b2b2b6" /><rect x="184.22" y="295.70" width="9.20" height="0.70" fill="#a4a4aa" /><rect x="52.28" y="312.60" width="3.60" height="0.80" fill="#d2d2d5" /><rect x="56.88" y="312.60" width="5.00" height="0.80" fill="#b2b2b6" /><rect x="52.68" y="328.90" width="9.20" height="0.70" fill="#a4a4aa" /><rect x="118.05" y="312.60" width="3.60" height="0.80" fill="#d2d2d5" /><rect x="122.65" y="312.60" width="5.00" height="0.80" fill="#b2b2b6" /><rect x="118.45" y="328.90" width="9.20" height="0.70" fill="#a4a4aa" /><rect x="183.82" y="312.60" width="3.60" height="0.80" fill="#d2d2d5" /><rect x="188.42" y="312.60" width="5.00" height="0.80" fill="#b2b2b6" /><rect x="184.22" y="328.90" width="9.20" height="0.70" fill="#a4a4aa" /><rect x="52.68" y="362.65" width="9.20" height="0.70" fill="#bbb" /><rect x="118.05" y="346.10" width="3.60" height="0.80" fill="#d2d2d5" /><rect x="122.65" y="346.10" width="5.00" height="0.80" fill="#b2b2b6" /><rect x="118.45" y="362.65" width="9.20" height="0.70" fill="#bbb" /><rect x="183.82" y="346.10" width="3.60" height="0.80" fill="#d2d2d5" /><rect x="188.42" y="346.10" width="5.00" height="0.80" fill="#b2b2b6" /><rect x="184.22" y="362.65" width="9.20" height="0.70" fill="#bbb" /><rect x="28.40" y="340.00" width="58.77" height="0.90" fill="#fbfbfb" /><rect x="28.40" y="349.40" width="58.77" height="0.90" fill="#fbfbfb" /><rect x="28.40" y="358.60" width="58.77" height="0.90" fill="#fbfbfb" /><rect x="36.59" y="335.60" width="3.20" height="0.60" fill="#dcdcdf" /><rect x="56.18" y="335.60" width="3.20" height="0.60" fill="#dcdcdf" /><rect x="75.77" y="335.60" width="3.20" height="0.60" fill="#dcdcdf" /><rect x="36.59" y="344.60" width="3.20" height="0.60" fill="#dcdcdf" /><rect x="56.18" y="344.60" width="3.20" height="0.60" fill="#dcdcdf" /><rect x="75.77" y="344.60" width="3.20" height="0.60" fill="#dcdcdf" /><rect x="36.59" y="353.60" width="3.20" height="0.60" fill="#dcdcdf" /><rect x="56.18" y="353.60" width="3.20" height="0.60" fill="#dcdcdf" /><rect x="75.77" y="353.60" width="3.20" height="0.60" fill="#dcdcdf" /><rect x="31.00" y="359.60" width="51.00" height="0.70" fill="#9a9aa0" /><rect x="56.00" y="360.30" width="28.00" height="0.50" fill="#d8c8a0" opacity="0.5"/><rect x="88.00" y="364.60" width="12.00" height="2.60" fill="#fafafa" /><circle cx="89.8" cy="365.9" r="0.9" fill="none" stroke="#999" stroke-width="0.3"/><rect x="95.00" y="364.60" width="12.00" height="2.60" fill="#fafafa" /><rect x="141.00" y="364.40" width="12.50" height="2.80" fill="#fdfdfd" /><circle cx="151.8" cy="365.8" r="0.9" fill="#cfe0f0" stroke="#567" stroke-width="0.3"/><rect x="99.00" y="365.50" width="4.00" height="0.60" fill="#bbb" /><rect x="143.60" y="365.50" width="4.00" height="0.60" fill="#aaa" /><rect x="24.4" y="367.4" width="197.3" height="4.10" fill="url(#t7task)"/><rect x="26.00" y="368.60" width="2.40" height="2.40" fill="#6a8a9a" /><rect x="31.00" y="369.40" width="1.20" height="1.00" fill="#99a" /><rect x="33.40" y="369.40" width="3.60" height="0.80" fill="#aab" /><rect x="47.00" y="368.70" width="2.20" height="2.30" fill="#7a9ac8" /><rect x="51.60" y="368.70" width="2.20" height="2.30" fill="#334" /><rect x="56.20" y="368.70" width="2.20" height="2.30" fill="#5a8ac0" /><rect x="60.80" y="368.70" width="2.20" height="2.30" fill="#2a4a8a" /><rect x="65.40" y="368.70" width="2.20" height="2.30" fill="#c8a040" /><rect x="70.00" y="368.70" width="2.20" height="2.30" fill="#7a6a5a" /><rect x="74.60" y="368.70" width="2.20" height="2.30" fill="#c06a8a" /><rect x="79.20" y="368.70" width="2.20" height="2.30" fill="#6a6a7a" /><rect x="83.80" y="368.70" width="2.20" height="2.30" fill="#4a7a5a" /><rect x="88.40" y="368.70" width="2.20" height="2.30" fill="#8a8a4a" /><rect x="93.00" y="368.70" width="2.20" height="2.30" fill="#5a8a6a" /><rect x="97.60" y="368.70" width="2.20" height="2.30" fill="#aab" /><rect x="102.20" y="368.70" width="2.20" height="2.30" fill="#6a8a5a" /><rect x="106.80" y="368.70" width="2.20" height="2.30" fill="#7a5a8a" /><rect x="111.40" y="368.70" width="2.20" height="2.30" fill="#8a4a6a" /><rect x="196.00" y="369.20" width="1.20" height="1.30" fill="#b4a8a0" /><rect x="198.60" y="369.20" width="1.20" height="1.30" fill="#b4a8a0" /><rect x="201.20" y="369.20" width="1.20" height="1.30" fill="#b4a8a0" /><rect x="203.80" y="369.20" width="1.20" height="1.30" fill="#b4a8a0" /><rect x="206.40" y="369.20" width="1.20" height="1.30" fill="#b4a8a0" /><rect x="209.00" y="369.20" width="1.20" height="1.30" fill="#b4a8a0" /><rect x="211.60" y="369.20" width="1.20" height="1.30" fill="#b4a8a0" /><rect x="214.20" y="369.20" width="1.20" height="1.30" fill="#b4a8a0" /><rect x="214.00" y="368.60" width="6.60" height="2.40" fill="#e0d4cc" /></svg>
<svg class="thumb" style="left:270.0px;top:261.2px" width="197.3" height="110.3" viewBox="270.0 261.2 197.3 110.3"><defs><filter id="b8" x="-5%" y="-5%" width="110%" height="110%"><feGaussianBlur stdDeviation="1.3"/></filter>
<filter id="b8s"><feGaussianBlur stdDeviation="0.4"/></filter><filter id="b8i"><feGaussianBlur stdDeviation="0.3"/></filter>
<linearGradient id="t8task" x1="0" x2="1" y1="0" y2="0"><stop offset="0" stop-color="#e6e8ec"/><stop offset="0.4" stop-color="#ebebeb"/><stop offset="0.75" stop-color="#ece4da"/><stop offset="1" stop-color="#e8e2d8"/></linearGradient></defs><rect x="270.00" y="261.20" width="197.30" height="110.30" fill="#0c1018" /><g filter="url(#b8)"><rect x="415.00" y="258.00" width="55.00" height="42.00" fill="#0e1a28" /><rect x="419.00" y="262.00" width="17.00" height="30.00" fill="#12202f" /><path d="M428 284 L436 272 L470 268 L470 284 Z" fill="#171614"/><rect x="430.00" y="279.00" width="40.00" height="17.00" fill="#4a3c24" /><rect x="366.00" y="287.00" width="58.00" height="11.00" fill="#15171a" /><rect x="376.00" y="296.00" width="26.00" height="44.00" fill="#38322a" /><rect x="366.00" y="296.00" width="12.00" height="68.00" fill="#14120e" /><rect x="400.00" y="298.00" width="32.00" height="44.00" fill="#26201b" /><rect x="430.00" y="296.00" width="40.00" height="24.00" fill="#281c14" /><rect x="378.00" y="336.00" width="18.00" height="26.00" fill="#1e1810" /><rect x="396.00" y="318.00" width="36.00" height="27.00" fill="#2c2018" /><rect x="430.00" y="318.00" width="40.00" height="22.00" fill="#2e1e12" /><rect x="436.00" y="338.00" width="34.00" height="10.00" fill="#9a5a28" /><rect x="428.00" y="347.00" width="42.00" height="17.00" fill="#261a12" /><rect x="414.00" y="340.00" width="18.00" height="24.00" fill="#1c1612" /><rect x="366.00" y="360.00" width="64.00" height="8.00" fill="#5c5446" /><rect x="430.00" y="362.00" width="40.00" height="6.00" fill="#3c342a" /></g><g filter="url(#b8s)"><rect x="433.80" y="283.40" width="7.60" height="10.20" fill="#ecd490" /><rect x="437.25" y="283.40" width="0.70" height="10.20" fill="#7a5a28" /><rect x="442.80" y="282.40" width="8.00" height="10.40" fill="#ecd490" /><rect x="446.45" y="282.40" width="0.70" height="10.40" fill="#7a5a28" /><rect x="451.80" y="281.20" width="6.80" height="10.40" fill="#ecd490" /><rect x="454.85" y="281.20" width="0.70" height="10.40" fill="#7a5a28" /><rect x="459.40" y="280.60" width="7.60" height="10.40" fill="#ecd490" /><rect x="462.85" y="280.60" width="0.70" height="10.40" fill="#7a5a28" /><rect x="379.80" y="295.00" width="4.40" height="6.60" fill="#a88c54" /><rect x="380.20" y="303.00" width="3.80" height="11.00" fill="#6e5c3a" /><rect x="392.00" y="302.00" width="2.40" height="10.00" fill="#c8aa6c" /><rect x="404.00" y="306.80" width="9.20" height="7.80" fill="#f2dc94" /><rect x="408.30" y="306.80" width="0.60" height="7.80" fill="#8a6a30" /><rect x="419.00" y="304.60" width="4.00" height="5.00" fill="#4a443c" /><rect x="404.00" y="315.60" width="6.00" height="6.40" fill="#3c4a34" /><rect x="431.00" y="297.00" width="36.30" height="20.60" fill="#2b1f16" /><text x="442.60" y="313.40" font-size="12.4" fill="#d6ccb2" opacity="0.78" style="font-family:Noto Serif CJK SC,serif" font-weight="500" text-anchor="middle">居</text><text x="458.60" y="313.40" font-size="12.4" fill="#d6ccb2" opacity="0.78" style="font-family:Noto Serif CJK SC,serif" font-weight="bold" text-anchor="middle">酒</text><ellipse cx="429" cy="326.6" rx="3.3" ry="4.8" fill="#d8a850" opacity="0.45"/><ellipse cx="429" cy="326.6" rx="2.5" ry="4" fill="#f6e096"/><ellipse cx="429" cy="326.6" rx="1.25" ry="2.4" fill="#fff6d0"/><ellipse cx="446" cy="323.6" rx="2.8" ry="4.0" fill="#d8a850" opacity="0.45"/><ellipse cx="446" cy="323.6" rx="2" ry="3.2" fill="#f6e096"/><ellipse cx="446" cy="323.6" rx="1.0" ry="1.92" fill="#fff6d0"/><ellipse cx="458.8" cy="322.6" rx="2.8" ry="4.0" fill="#d8a850" opacity="0.45"/><ellipse cx="458.8" cy="322.6" rx="2" ry="3.2" fill="#f6e096"/><ellipse cx="458.8" cy="322.6" rx="1.0" ry="1.92" fill="#fff6d0"/><rect x="436.60" y="327.40" width="30.70" height="10.00" fill="#5a4428" /><text x="451.60" y="335.60" font-size="8.2" fill="#d8c8a0" style="font-family:Noto Serif CJK SC,serif" font-weight="bold" text-anchor="middle" textLength="29" lengthAdjust="spacingAndGlyphs">居酒屋</text><rect x="436.00" y="340.60" width="31.30" height="5.80" fill="#c47630" /><rect x="438.00" y="341.40" width="14.00" height="3.20" fill="#e09a4c" /><rect x="454.00" y="341.00" width="12.00" height="4.00" fill="#d88a40" /><path d="M389 356 L390.5 348.5 L396 344.6 L409 344.6 L413 349 L414.4 357.5 L389 358 Z" fill="#504c44"/><path d="M393 348.6 L396.6 345.6 L408.4 345.6 L410.6 349 Z" fill="#2a2a28"/><circle cx="386.6" cy="351.8" r="2.9" fill="#fff8d0" opacity="0.3"/><circle cx="386.6" cy="351.8" r="1.7" fill="#fff8d0"/><circle cx="402.4" cy="352.6" r="2.9" fill="#fff8d0" opacity="0.3"/><circle cx="402.4" cy="352.6" r="1.7" fill="#fff8d0"/><circle cx="386.4" cy="357.8" r="2.4" fill="#f0cc44" opacity="0.3"/><circle cx="386.4" cy="357.8" r="1.2" fill="#f0cc44"/><circle cx="401.4" cy="358.6" r="2.5" fill="#f0cc44" opacity="0.3"/><circle cx="401.4" cy="358.6" r="1.3" fill="#f0cc44"/><rect x="391.40" y="356.80" width="4.60" height="1.40" fill="#b4b0a4" /></g><g filter="url(#b8i)"><rect x="459.60" y="262.20" width="3.00" height="3.60" fill="#dcecdc" /><rect x="458.60" y="266.80" width="5.00" height="0.60" fill="#9a9a9a" opacity="0.7"/><rect x="459.60" y="272.20" width="3.00" height="3.60" fill="#e6ca68" /><rect x="458.60" y="276.80" width="5.00" height="0.60" fill="#9a9a9a" opacity="0.7"/><rect x="459.60" y="294.20" width="3.00" height="3.60" fill="#ece6f2" /><rect x="458.60" y="298.80" width="5.00" height="0.60" fill="#9a9a9a" opacity="0.7"/><rect x="459.60" y="311.60" width="3.00" height="3.60" fill="#ecece6" /><rect x="458.60" y="316.20" width="5.00" height="0.60" fill="#9a9a9a" opacity="0.7"/><rect x="459.60" y="334.20" width="3.00" height="3.60" fill="#e8e0cc" /><rect x="458.60" y="338.80" width="5.00" height="0.60" fill="#9a9a9a" opacity="0.7"/><rect x="459.60" y="343.60" width="3.00" height="3.60" fill="#e8e8e8" /><rect x="458.60" y="348.20" width="5.00" height="0.60" fill="#9a9a9a" opacity="0.7"/><rect x="459.60" y="355.20" width="3.00" height="3.60" fill="#e6ca68" /><rect x="458.60" y="359.80" width="5.00" height="0.60" fill="#9a9a9a" opacity="0.7"/></g><rect x="270.00" y="261.00" width="148.00" height="7.70" fill="#2b2b2e" /><rect x="270.00" y="265.20" width="148.00" height="3.50" fill="#38383b" /><rect x="271.00" y="262.40" width="1.60" height="1.40" fill="#c8c8c8" /><rect x="274.60" y="262.60" width="1.20" height="1.00" fill="#999" /><rect x="282.00" y="262.80" width="15.00" height="0.90" fill="#bdbdbd" /><rect x="299.50" y="262.80" width="1.00" height="0.90" fill="#888" /><rect x="306.00" y="262.80" width="17.00" height="0.90" fill="#e0e0e0" /><rect x="325.50" y="262.80" width="1.00" height="0.90" fill="#888" /><rect x="330.00" y="262.80" width="15.00" height="0.90" fill="#f0f0f0" /><rect x="347.50" y="262.80" width="1.00" height="0.90" fill="#888" /><rect x="281.00" y="262.20" width="19.50" height="3.00" fill="#38383b" /><rect x="282.00" y="262.80" width="15.00" height="0.90" fill="#cfcfcf" /><rect x="352.00" y="262.60" width="1.40" height="1.20" fill="#aaa" /><rect x="272.00" y="266.40" width="1.40" height="1.10" fill="#777" /><rect x="275.00" y="266.40" width="1.40" height="1.10" fill="#777" /><rect x="278.00" y="266.40" width="1.40" height="1.10" fill="#777" /><rect x="283.00" y="266.20" width="82.00" height="1.60" fill="#2a2a2d" /><rect x="286.00" y="266.60" width="14.00" height="0.70" fill="#ddd" /><rect x="300.00" y="266.60" width="18.00" height="0.70" fill="#888" /><rect x="270.60" y="268.50" width="147.40" height="20.40" fill="#ffffff" /><rect x="270.60" y="280.00" width="97.80" height="86.80" fill="#ffffff" /><rect x="270.00" y="261.00" width="0.70" height="106.00" fill="#3a3a3c" /><rect x="270.00" y="366.50" width="98.60" height="0.60" fill="#55575a" /><rect x="368.20" y="288.60" width="0.50" height="78.40" fill="#2a2a2c" /><rect x="270.0" y="367.1" width="197.3" height="4.40" fill="url(#t8task)"/><rect x="271.60" y="368.60" width="2.40" height="2.20" fill="#8a9aaa" /><rect x="276.60" y="369.40" width="1.20" height="1.00" fill="#99a" /><rect x="279.00" y="369.40" width="4.00" height="0.80" fill="#aab" /><rect x="294.00" y="368.80" width="3.00" height="2.00" fill="#9ab" /><rect x="300.00" y="368.60" width="2.20" height="2.40" fill="#345" /><rect x="304.60" y="368.60" width="2.20" height="2.40" fill="#457" /><rect x="309.20" y="368.60" width="2.20" height="2.40" fill="#bbb" /><rect x="313.80" y="368.60" width="2.20" height="2.40" fill="#998" /><rect x="318.40" y="368.60" width="2.20" height="2.40" fill="#222" /><rect x="444.00" y="369.20" width="1.20" height="1.30" fill="#9a9a98" /><rect x="446.70" y="369.20" width="1.20" height="1.30" fill="#9a9a98" /><rect x="449.40" y="369.20" width="1.20" height="1.30" fill="#9a9a98" /><rect x="452.10" y="369.20" width="1.20" height="1.30" fill="#9a9a98" /><rect x="454.80" y="369.20" width="1.20" height="1.30" fill="#9a9a98" /><rect x="457.50" y="369.20" width="1.20" height="1.30" fill="#9a9a98" /><rect x="460.00" y="368.80" width="6.00" height="2.00" fill="#b8b4ac" /></svg>
<svg class="thumb" style="left:516.0px;top:261.2px" width="197.3" height="110.3" viewBox="516.0 261.2 197.3 110.3"><defs><linearGradient id="t9blue" x1="0" x2="1" y1="0" y2="1"><stop offset="0" stop-color="#44689c"/><stop offset="0.5" stop-color="#7ea2cc"/><stop offset="1" stop-color="#4a74a8"/></linearGradient>
<linearGradient id="t9task" x1="0" x2="1" y1="0" y2="0"><stop offset="0" stop-color="#eef0f4"/><stop offset="0.5" stop-color="#e8eef6"/><stop offset="1" stop-color="#f0f0f2"/></linearGradient></defs><rect x="516.00" y="261.20" width="197.30" height="110.30" fill="#131315" /><rect x="516.00" y="261.20" width="197.30" height="3.40" fill="#0c0c0e" /><rect x="518.00" y="262.90" width="4.00" height="0.80" fill="#777" /><rect x="524.50" y="262.90" width="4.50" height="0.80" fill="#777" /><rect x="532.00" y="262.90" width="1.40" height="0.80" fill="#777" /><rect x="695.4" y="262.5" width="5.4" height="1.8" rx="0.9" fill="#2f8a88"/><rect x="670.00" y="262.90" width="3.00" height="0.80" fill="#666" /><rect x="680.00" y="262.90" width="4.00" height="0.80" fill="#666" /><rect x="688.00" y="262.90" width="4.00" height="0.80" fill="#666" /><rect x="704.00" y="262.90" width="1.20" height="0.80" fill="#666" /><rect x="707.00" y="262.90" width="1.20" height="0.80" fill="#666" /><rect x="710.00" y="262.90" width="1.20" height="0.80" fill="#666" /><rect x="519.60" y="271.60" width="5.40" height="0.90" fill="#3c3e42" /><rect x="519.60" y="275.80" width="6.40" height="0.90" fill="#3c3e42" /><rect x="519.60" y="280.00" width="5.40" height="0.90" fill="#3c3e42" /><rect x="519.60" y="284.20" width="6.40" height="0.90" fill="#3c3e42" /><rect x="519.60" y="288.40" width="5.40" height="0.90" fill="#3c3e42" /><rect x="519.60" y="292.60" width="6.40" height="0.90" fill="#3c3e42" /><rect x="520.40" y="323.00" width="1.20" height="1.00" fill="#4a4c50" /><rect x="523.00" y="323.00" width="1.20" height="1.00" fill="#3a3c40" /><rect x="520.40" y="327.20" width="1.20" height="1.00" fill="#4a4c50" /><rect x="523.00" y="327.20" width="1.20" height="1.00" fill="#3a3c40" /><rect x="520.40" y="331.40" width="1.20" height="1.00" fill="#4a4c50" /><rect x="523.00" y="331.40" width="1.20" height="1.00" fill="#3a3c40" /><rect x="520.40" y="335.60" width="1.20" height="1.00" fill="#4a4c50" /><rect x="523.00" y="335.60" width="1.20" height="1.00" fill="#3a3c40" /><rect x="520.40" y="339.80" width="1.20" height="1.00" fill="#4a4c50" /><rect x="523.00" y="339.80" width="1.20" height="1.00" fill="#3a3c40" /><rect x="520.40" y="344.00" width="1.20" height="1.00" fill="#4a4c50" /><rect x="523.00" y="344.00" width="1.20" height="1.00" fill="#3a3c40" /><rect x="520.40" y="348.20" width="1.20" height="1.00" fill="#4a4c50" /><rect x="523.00" y="348.20" width="1.20" height="1.00" fill="#3a3c40" /><rect x="520.40" y="352.40" width="1.20" height="1.00" fill="#4a4c50" /><rect x="523.00" y="352.40" width="1.20" height="1.00" fill="#3a3c40" /><rect x="520.40" y="356.60" width="1.20" height="1.00" fill="#4a4c50" /><rect x="523.00" y="356.60" width="1.20" height="1.00" fill="#3a3c40" /><rect x="520.40" y="360.80" width="1.20" height="1.00" fill="#4a4c50" /><rect x="523.00" y="360.80" width="1.20" height="1.00" fill="#3a3c40" /><rect x="520.00" y="265.60" width="8.00" height="0.80" fill="#3a3c40" /><rect x="534.00" y="265.40" width="4.00" height="0.90" fill="#2c2e32" /><rect x="543.00" y="265.40" width="4.00" height="0.90" fill="#2c2e32" /><rect x="552.00" y="265.40" width="4.00" height="0.90" fill="#2c2e32" /><rect x="561.00" y="265.40" width="4.00" height="0.90" fill="#2c2e32" /><rect x="570.00" y="265.40" width="4.00" height="0.90" fill="#2c2e32" /><rect x="579.00" y="265.40" width="4.00" height="0.90" fill="#2c2e32" /><rect x="588.00" y="265.40" width="4.00" height="0.90" fill="#2c2e32" /><rect x="597.00" y="265.40" width="4.00" height="0.90" fill="#2c2e32" /><rect x="701.00" y="277.40" width="10.00" height="0.80" fill="#3a3c40" /><rect x="701.00" y="280.00" width="7.00" height="0.70" fill="#2e3034" /><rect x="703.50" y="352.40" width="8.00" height="2.20" fill="#2c2e32" /><rect x="700.40" y="357.60" width="1.00" height="1.00" fill="#666" /><rect x="703.00" y="357.80" width="7.00" height="0.70" fill="#444" /><rect x="530.20" y="267.00" width="168.80" height="95.00" fill="#1d1f2b" /><rect x="533.40" y="269.20" width="1.20" height="1.20" fill="#4a5a9a" /><rect x="536.60" y="269.40" width="0.80" height="0.80" fill="#555" /><rect x="539.00" y="269.30" width="2.00" height="1.00" fill="#556" /><rect x="593.9" y="267.4" width="50.4" height="4.4" rx="1" fill="#3a3c49"/><rect x="596.00" y="269.20" width="13.00" height="0.90" fill="#b4b6be" /><rect x="637.60" y="268.90" width="5.00" height="1.50" fill="#8a8c94" /><rect x="535.60" y="274.40" width="3.40" height="1.10" fill="#d8444a" /><rect x="535.80" y="276.60" width="3.00" height="0.40" fill="#d8444a" /><rect x="546.00" y="274.40" width="4.00" height="1.10" fill="#b0b2ba" /><rect x="557.00" y="274.40" width="4.00" height="1.10" fill="#b0b2ba" /><rect x="568.00" y="274.40" width="4.00" height="1.10" fill="#b0b2ba" /><rect x="535.20" y="279.40" width="23.30" height="17.40" fill="#e4e6e2" /><rect x="535.80" y="280.90" width="22.10" height="0.30" fill="#b4b8b4" /><rect x="535.80" y="283.10" width="22.10" height="0.30" fill="#b4b8b4" /><rect x="535.80" y="285.30" width="22.10" height="0.30" fill="#b4b8b4" /><rect x="535.80" y="287.50" width="22.10" height="0.30" fill="#b4b8b4" /><rect x="535.80" y="289.70" width="22.10" height="0.30" fill="#b4b8b4" /><rect x="535.80" y="291.90" width="22.10" height="0.30" fill="#b4b8b4" /><rect x="535.80" y="294.10" width="22.10" height="0.30" fill="#b4b8b4" /><rect x="537.20" y="280.40" width="0.30" height="13.40" fill="#c0c4c0" /><rect x="540.80" y="280.40" width="0.30" height="13.40" fill="#c0c4c0" /><rect x="544.40" y="280.40" width="0.30" height="13.40" fill="#c0c4c0" /><rect x="548.00" y="280.40" width="0.30" height="13.40" fill="#c0c4c0" /><rect x="551.60" y="280.40" width="0.30" height="13.40" fill="#c0c4c0" /><rect x="555.20" y="280.40" width="0.30" height="13.40" fill="#c0c4c0" /><rect x="535.20" y="294.00" width="23.30" height="2.80" fill="#c8ccc6" /><rect x="535.70" y="279.90" width="7.50" height="1.50" fill="#d0dcc8" /><rect x="560.60" y="279.40" width="23.30" height="17.40" fill="#5c86b4" /><rect x="560.6" y="279.4" width="23.3" height="17.40" fill="url(#t9blue)"/><rect x="563.60" y="284.00" width="17.30" height="2.40" fill="#c8dcf0" opacity="0.85"/><rect x="567.60" y="288.40" width="9.00" height="5.00" fill="#a8c4e4" opacity="0.6"/><rect x="585.90" y="279.40" width="23.30" height="17.40" fill="#d88252" /><rect x="590.90" y="281.00" width="13.00" height="2.40" fill="#f2cdb0" opacity="0.8"/><rect x="587.30" y="287.00" width="6.60" height="4.00" fill="#4a4a58" /><rect x="594.50" y="286.00" width="6.40" height="5.00" fill="#f4e8dc" /><rect x="601.50" y="287.00" width="6.40" height="4.00" fill="#e8b890" /><rect x="585.90" y="293.80" width="23.30" height="3.00" fill="#b8623a" /><rect x="610.80" y="279.40" width="24.10" height="17.40" fill="#f4f4f0" /><rect x="611.80" y="281.40" width="22.20" height="0.50" fill="#c8ccc8" /><rect x="611.80" y="283.90" width="22.20" height="0.50" fill="#c8ccc8" /><rect x="611.80" y="286.40" width="22.20" height="0.50" fill="#c8ccc8" /><rect x="611.80" y="288.90" width="22.20" height="0.50" fill="#c8ccc8" /><rect x="611.80" y="291.40" width="22.20" height="0.50" fill="#c8ccc8" /><rect x="611.80" y="293.90" width="22.20" height="0.50" fill="#c8ccc8" /><rect x="622.80" y="282.40" width="8.00" height="10.00" fill="#d8dcd4" /><rect x="627.80" y="291.40" width="4.00" height="3.00" fill="#4a4a4a" /><rect x="610.80" y="279.40" width="2.00" height="17.40" fill="#c8c4b0" /><rect x="536.20" y="298.80" width="20.30" height="0.90" fill="#d4d6dc" /><rect x="536.20" y="300.90" width="14.30" height="0.90" fill="#d4d6dc" /><rect x="536.20" y="303.60" width="1.00" height="0.80" fill="#777" /><rect x="538.00" y="303.70" width="10.20" height="0.70" fill="#7c7e88" /><rect x="561.60" y="298.80" width="20.30" height="0.90" fill="#d4d6dc" /><rect x="561.60" y="300.90" width="14.30" height="0.90" fill="#d4d6dc" /><rect x="561.60" y="303.60" width="1.00" height="0.80" fill="#777" /><rect x="563.40" y="303.70" width="10.20" height="0.70" fill="#7c7e88" /><rect x="586.90" y="298.80" width="20.30" height="0.90" fill="#d4d6dc" /><rect x="586.90" y="300.90" width="14.30" height="0.90" fill="#d4d6dc" /><rect x="586.90" y="303.60" width="1.00" height="0.80" fill="#777" /><rect x="588.70" y="303.70" width="10.20" height="0.70" fill="#7c7e88" /><rect x="611.80" y="298.80" width="22.20" height="0.90" fill="#d4d6dc" /><rect x="611.80" y="300.90" width="16.20" height="0.90" fill="#d4d6dc" /><rect x="611.80" y="303.60" width="14.20" height="0.70" fill="#7c7e88" /><rect x="535.20" y="308.70" width="23.30" height="31.30" fill="#1c2c52" /><rect x="535.20" y="308.70" width="23.30" height="2.20" fill="#62b4a4" /><path d="M537.2 311.7 L544.2 320.7 L544.2 328.7 L537.2 330.7 Z" fill="#2c4478"/><path d="M556.5 311.7 L549.2 320.7 L549.2 328.7 L556.5 330.7 Z" fill="#2c4478"/><rect x="544.80" y="318.70" width="4.00" height="10.00" fill="#8ab0d8" /><rect x="535.20" y="331.20" width="23.30" height="8.80" fill="#92d2c8" /><rect x="537.20" y="332.40" width="18.00" height="1.20" fill="#3a6a68" /><rect x="552.20" y="336.20" width="5.00" height="2.20" fill="#2a5a58" /><rect x="560.60" y="308.70" width="23.30" height="18.20" fill="#6c908e" /><rect x="564.60" y="308.70" width="12.00" height="5.00" fill="#d8e4e4" /><rect x="562.60" y="316.70" width="19.30" height="5.00" fill="#4c706e" /><rect x="560.60" y="324.00" width="23.30" height="2.90" fill="#8aa8a4" /><rect x="585.90" y="308.70" width="23.30" height="18.20" fill="#8c7a62" /><rect x="592.90" y="308.70" width="10.00" height="5.00" fill="#5a8a98" /><rect x="593.90" y="309.70" width="6.00" height="3.00" fill="#c8dce4" /><rect x="585.90" y="317.70" width="23.30" height="5.00" fill="#a8987c" /><rect x="603.90" y="310.70" width="4.00" height="14.00" fill="#3a3430" /><rect x="610.80" y="308.70" width="24.10" height="18.20" fill="#7a7466" /><rect x="612.80" y="309.70" width="12.00" height="7.00" fill="#b8b4a4" /><rect x="620.80" y="317.70" width="14.10" height="5.00" fill="#5a8a98" /><rect x="561.60" y="328.60" width="20.30" height="0.90" fill="#d4d6dc" /><rect x="561.60" y="331.30" width="1.00" height="0.80" fill="#777" /><rect x="563.40" y="331.40" width="10.20" height="0.70" fill="#7c7e88" /><rect x="561.60" y="330.80" width="1.00" height="0.80" fill="#777" /><rect x="586.90" y="328.60" width="20.30" height="0.90" fill="#d4d6dc" /><rect x="586.90" y="331.30" width="1.00" height="0.80" fill="#777" /><rect x="588.70" y="331.40" width="10.20" height="0.70" fill="#7c7e88" /><rect x="586.90" y="330.80" width="1.00" height="0.80" fill="#777" /><rect x="611.80" y="328.60" width="22.20" height="0.90" fill="#d4d6dc" /><rect x="611.80" y="331.40" width="14.20" height="0.70" fill="#7c7e88" /><rect x="536.20" y="342.20" width="20.30" height="0.90" fill="#d4d6dc" /><rect x="536.20" y="344.30" width="14.30" height="0.90" fill="#d4d6dc" /><rect x="536.20" y="347.00" width="1.00" height="0.80" fill="#777" /><rect x="538.00" y="347.10" width="10.20" height="0.70" fill="#7c7e88" /><rect x="560.60" y="338.50" width="23.30" height="17.40" fill="#3c3229" /><path d="M575.6 338.5 L583.9 338.5 L583.9 349.5 L580.6 351.5 Z" fill="#4a8ab8"/><ellipse cx="570.6" cy="345.5" rx="6" ry="4.5" fill="#7a6a58"/><rect x="560.60" y="351.90" width="23.30" height="4.00" fill="#6a6252" /><rect x="585.90" y="338.50" width="23.30" height="17.40" fill="#3c8eb2" /><rect x="586.90" y="339.70" width="21.30" height="15.00" fill="#e8eef4" /><rect x="589.90" y="342.50" width="15.00" height="2.40" fill="#4a5a6a" /><rect x="591.40" y="349.90" width="12.00" height="3.00" fill="#9cc4d4" /><rect x="592.90" y="350.90" width="9.00" height="1.00" fill="#3a5a6a" /><rect x="610.80" y="338.50" width="24.10" height="17.40" fill="#8a8a86" /><rect x="611.80" y="342.50" width="7.00" height="8.00" fill="#c4c4c0" /><rect x="619.80" y="340.50" width="15.10" height="7.00" fill="#5a5e62" /><rect x="535.20" y="349.00" width="23.30" height="12.60" fill="#15161c" /><rect x="540.20" y="354.90" width="14.00" height="1.70" fill="#d89a4c" /><rect x="538.20" y="357.60" width="17.00" height="2.00" fill="#d85a4a" /><rect x="540.20" y="358.10" width="13.00" height="0.90" fill="#f4c8b8" /><rect x="561.60" y="357.60" width="19.30" height="0.90" fill="#d4d6dc" /><rect x="561.60" y="360.00" width="14.30" height="0.80" fill="#a4a6ac" /><rect x="586.90" y="357.60" width="19.30" height="0.90" fill="#d4d6dc" /><rect x="586.90" y="360.00" width="14.30" height="0.80" fill="#a4a6ac" /><rect x="611.80" y="357.60" width="22.20" height="0.90" fill="#d4d6dc" /><rect x="535.00" y="279.00" width="101.00" height="83.00" fill="#10121a" opacity="0.14"/><rect x="636.60" y="272.50" width="62.40" height="89.50" fill="#272935" /><rect x="636.60" y="272.50" width="8.80" height="89.50" fill="#22242f" /><rect x="647.60" y="275.00" width="16.40" height="1.00" fill="#dcdee6" /><rect x="682.60" y="275.00" width="5.00" height="1.00" fill="#6a8ad0" /><rect x="690.00" y="275.10" width="1.00" height="0.80" fill="#888" /><rect x="694.00" y="275.10" width="1.00" height="0.80" fill="#888" /><circle cx="641" cy="280.6" r="2.1" fill="#c8a460"/><circle cx="641" cy="287.8" r="2.1" fill="#e0e0dc"/><circle cx="641" cy="294.2" r="2.1" fill="#9a9a9a"/><rect x="679.00" y="278.00" width="11.40" height="6.80" fill="#2c4a8a" /><rect x="679.00" y="279.70" width="11.40" height="3.74" fill="#a8c4e8" /><rect x="681.00" y="280.38" width="7.50" height="2.38" fill="#e4eefa" /><rect x="679.00" y="283.20" width="11.40" height="1.60" fill="#1c2c5a" /><rect x="679.00" y="292.00" width="11.40" height="12.40" fill="#2c4a8a" /><rect x="679.00" y="295.10" width="11.40" height="6.82" fill="#a8c4e8" /><rect x="681.00" y="296.34" width="7.50" height="4.34" fill="#e4eefa" /><rect x="679.00" y="302.80" width="11.40" height="1.60" fill="#1c2c5a" /><rect x="679.00" y="311.60" width="11.40" height="11.60" fill="#2c4a8a" /><rect x="679.00" y="314.50" width="11.40" height="6.38" fill="#a8c4e8" /><rect x="681.00" y="315.66" width="7.50" height="4.06" fill="#e4eefa" /><rect x="679.00" y="321.60" width="11.40" height="1.60" fill="#1c2c5a" /><circle cx="692.8" cy="291.4" r="1.5" fill="#c8b88a"/><circle cx="692.8" cy="311" r="1.5" fill="#c8b88a"/><rect x="668.00" y="288.40" width="4.00" height="0.50" fill="#555" /><rect x="682.00" y="306.40" width="1.00" height="0.80" fill="#777" /><rect x="685.00" y="306.40" width="1.00" height="0.80" fill="#777" /><rect x="648" y="332" width="48" height="5" rx="1.2" fill="#3a3c4a"/><rect x="650.00" y="334.00" width="12.00" height="0.90" fill="#888a94" /><rect x="692.00" y="333.60" width="2.00" height="1.80" fill="#aaa" /><rect x="636.00" y="339.00" width="23.80" height="16.40" fill="#34a4c0" /><rect x="637.40" y="340.60" width="21.00" height="11.40" fill="#e6f0f6" /><rect x="640.00" y="342.00" width="16.00" height="1.40" fill="#9cc0d8" /><rect x="637.40" y="350.00" width="21.00" height="2.60" fill="#e8a8b8" /><rect x="636.00" y="353.60" width="23.80" height="1.80" fill="#2a8aa8" /><rect x="637.00" y="357.60" width="19.00" height="0.90" fill="#d4d6dc" /><rect x="637.00" y="360.00" width="13.00" height="0.80" fill="#a4a6ac" /><rect x="657.00" y="268.40" width="1.60" height="1.40" fill="#7a7c88" /><rect x="656.60" y="270.60" width="2.40" height="0.50" fill="#555" /><rect x="661.40" y="268.40" width="1.60" height="1.40" fill="#7a7c88" /><rect x="661.00" y="270.60" width="2.40" height="0.50" fill="#555" /><rect x="665.80" y="268.40" width="1.60" height="1.40" fill="#7a7c88" /><rect x="665.40" y="270.60" width="2.40" height="0.50" fill="#555" /><rect x="670.20" y="268.40" width="1.60" height="1.40" fill="#7a7c88" /><rect x="669.80" y="270.60" width="2.40" height="0.50" fill="#555" /><rect x="674.60" y="268.40" width="1.60" height="1.40" fill="#7a7c88" /><rect x="674.20" y="270.60" width="2.40" height="0.50" fill="#555" /><circle cx="678.4" cy="269.4" r="1.9" fill="#d8b878"/><rect x="685.00" y="269.00" width="1.00" height="0.90" fill="#666" /><rect x="688.60" y="269.00" width="1.00" height="0.90" fill="#666" /><rect x="692.20" y="269.00" width="1.00" height="0.90" fill="#666" /><rect x="516.00" y="362.00" width="197.30" height="4.60" fill="#111113" /><rect x="516.0" y="366.6" width="197.3" height="4.90" fill="url(#t9task)"/><rect x="589.00" y="368.00" width="2.00" height="2.60" fill="#4a8ac8" /><rect x="594.00" y="368.80" width="6.00" height="0.80" fill="#99a" /><rect x="606.00" y="368.00" width="2.20" height="2.60" fill="#345" /><rect x="610.60" y="368.00" width="2.20" height="2.60" fill="#567" /><rect x="615.20" y="368.00" width="2.20" height="2.60" fill="#234" /><rect x="619.80" y="368.00" width="2.20" height="2.60" fill="#89a" /><rect x="624.40" y="368.00" width="2.20" height="2.60" fill="#456" /><rect x="629.00" y="368.00" width="2.20" height="2.60" fill="#333" /><rect x="633.60" y="368.00" width="2.20" height="2.60" fill="#59a" /></svg>
<div class="lbl" style="left:63.1px;top:127.9px">1212-192.168.2.26</div>
<div class="lbl" style="left:308.6px;top:127.9px">77-192.168.2.25</div>
<div class="lbl" style="left:554.6px;top:127.9px">顾晔-192.168.2.23</div>
<div class="lbl" style="left:63.1px;top:252.4px">静静-192.168.2.13</div>
<div class="lbl" style="left:308.6px;top:252.4px">玛玛-192.168.2.29</div>
<div class="lbl" style="left:554.6px;top:252.4px">学学-192.168.2.15</div>
<div class="lbl" style="left:63.1px;top:377.2px">柯汀-192.168.2.11</div>
<div class="lbl" style="left:308.6px;top:377.2px">邓艳生-192.168.2.19</div>
<div class="lbl" style="left:554.6px;top:377.2px">小小-192.168.2.21</div>
<div class="btn" style="left:247px;top:384.2px;width:47.8px;height:11.6px"><span class="abs" style="left:22.9px;top:0">上一页</span></div>
<svg class="abs" style="left:247.5px;top:384px" width="13" height="13" viewBox="0 0 13 13"><circle cx="6.5" cy="6.5" r="5.4" fill="#fcfcfc" stroke="#555" stroke-width="0.7"/><path d="M9.6 6.5 H3.8 M6.2 4 L3.7 6.5 L6.2 9" fill="none" stroke="#555" stroke-width="0.9"/></svg>
<div class="btn" style="left:442.4px;top:384.2px;width:48.2px;height:11.6px;border-color:#c8c8c8"><span class="abs" style="left:9.6px;top:0;color:#444">下一页</span></div>
<svg class="abs" style="left:476.5px;top:383.8px" width="13" height="13" viewBox="0 0 13 13"><circle cx="6.5" cy="6.5" r="5.5" fill="#d9e8f6" stroke="#2d4763" stroke-width="0.8"/><path d="M3.4 6.5 H9.2 M6.8 4 L9.3 6.5 L6.8 9" fill="none" stroke="#2d4763" stroke-width="1"/></svg>
<div class="abs" style="left:0;top:396.6px;width:738px;height:3.4px;background:linear-gradient(90deg,#e9e6f3 0%,#ebe4ee 22%,#f5e4dc 36%,#f6e6e0 55%,#ece6ee 66%,#e3e6f4 80%,#e6e4f2 100%)"></div>
<svg class="abs" style="left:508px;top:362px" width="228" height="26" viewBox="508 362 228 26"><g fill="#fff" stroke="#cdcdcd" stroke-width="0.9"><path d="M519.7 373.2 C523.2 373.2 528.7 380 527.7 382.7 C527 384.7 522 384.4 519.7 384.4 C517.4 384.4 512.4 384.7 511.7 382.7 C510.7 380 516.2 373.2 519.7 373.2 Z"/><ellipse cx="513.1" cy="372.2" rx="1.7" ry="2.3" transform="rotate(-20 513.1 372.2)"/><ellipse cx="517.4" cy="368.6" rx="1.8" ry="2.6"/><ellipse cx="522.8" cy="368.6" rx="1.8" ry="2.6"/><ellipse cx="526.8" cy="372.2" rx="1.7" ry="2.3" transform="rotate(20 526.8 372.2)"/></g><text x="519.7" y="381.6" font-size="6.2" fill="#c4c4c4" text-anchor="middle" style="font-family:Liberation Serif,serif">du</text><text x="531" y="381.6" font-size="19.2" fill="#ffffff" stroke="#c2c2c2" stroke-width="0.9" paint-order="stroke">@</text><text x="551.3" y="381.6" font-size="19.2" fill="#ffffff" stroke="#c2c2c2" stroke-width="0.9" paint-order="stroke" textLength="173.2" lengthAdjust="spacing">石家庄洞察之眼软件</text></svg>
</div></body></html>
